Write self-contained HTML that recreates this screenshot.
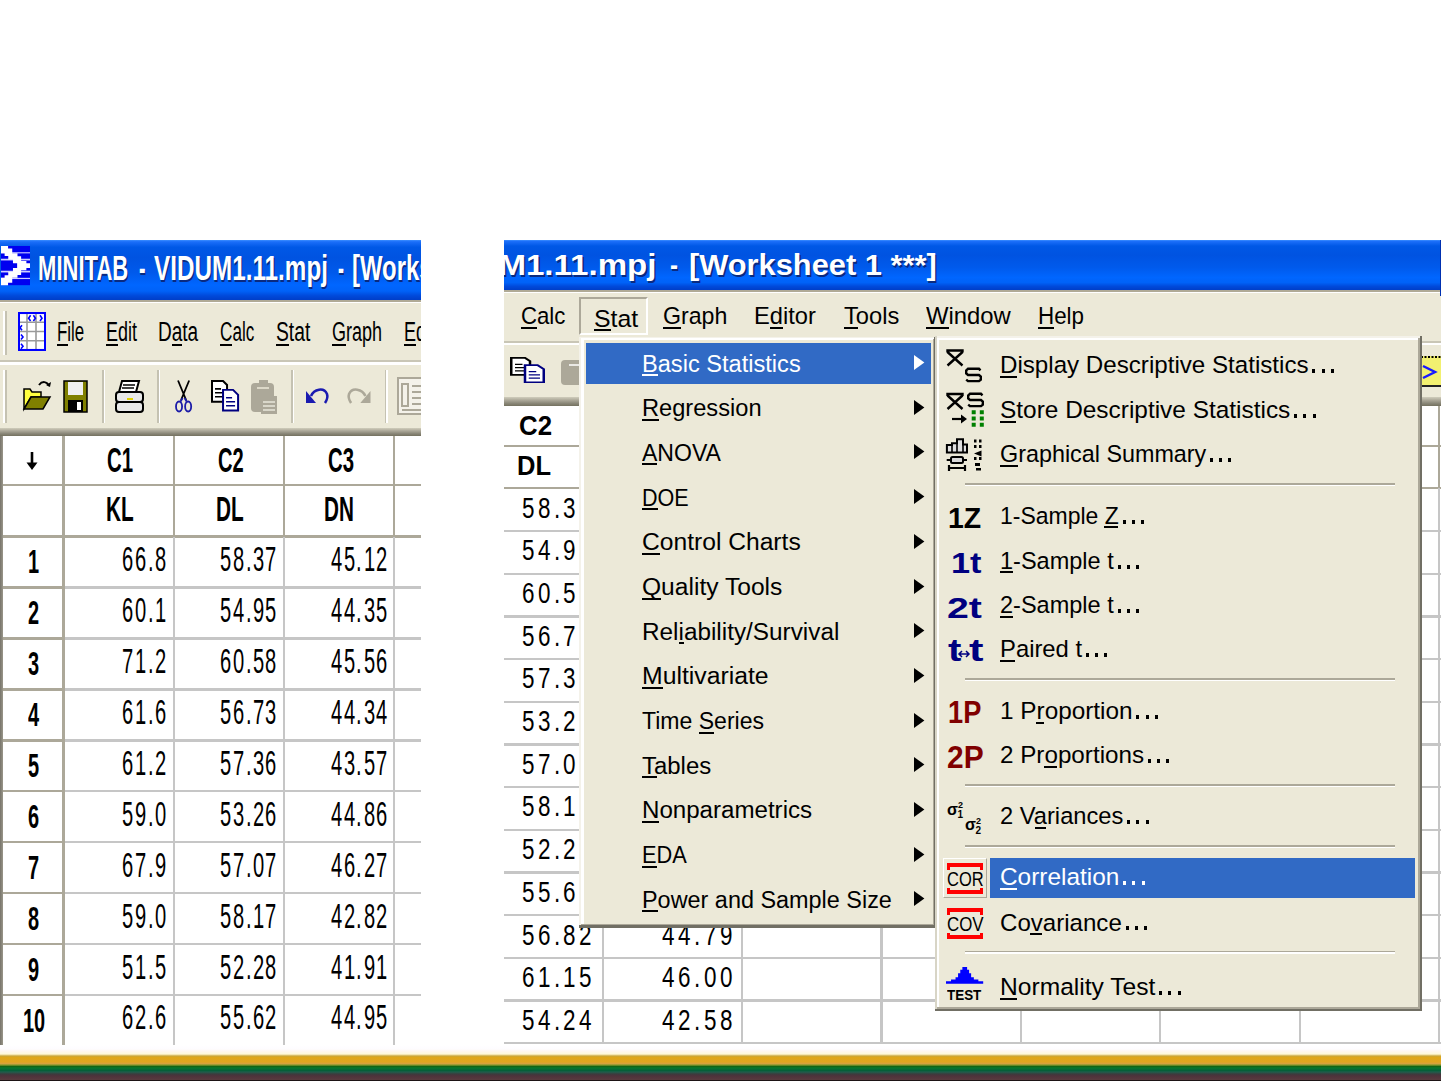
<!DOCTYPE html>
<html><head><meta charset="utf-8"><style>
html,body{margin:0;padding:0;width:1441px;height:1081px;overflow:hidden;background:#fff}
div,span,svg{position:absolute}
span{white-space:nowrap;font-family:"Liberation Sans",sans-serif;transform-origin:0 0}
svg{overflow:visible}
</style></head><body>
<div style="left:0.00px;top:0.00px;width:1441.00px;height:1081.00px;background:#fff;"></div>
<div style="left:0px;top:240px;width:421px;height:805px;overflow:hidden;">
<div style="left:0.00px;top:0.00px;width:421.00px;height:60.00px;background:linear-gradient(180deg,#3c8eff 0%,#1b6ef9 3%,#0058e6 12%,#0053e1 30%,#005aec 55%,#0066ff 75%,#0062f8 85%,#0049da 93%,#003ec8 100%);"></div>
<svg style="left:1.30px;top:6.20px;" width="29.00" height="39.20" viewBox="0 0 16 16" preserveAspectRatio="none"><rect width="16" height="16" fill="#0000f0"/><rect y="2.55" width="16" height="0.45" fill="#d0d0ff"/><rect y="5.2" width="16" height="0.7" fill="#d0d0ff"/><rect y="10.1" width="16" height="0.7" fill="#d0d0ff"/><rect y="13" width="16" height="0.5" fill="#d0d0ff"/><polygon fill="#fff" points="0,0 3.9,0 3.9,1 6.2,1 6.2,3 9.1,3 9.1,4.2 11.1,4.2 11.1,6.1 14,6.1 14,7 16,7 16,9 14,9 14,9.9 11.1,9.9 11.1,11.8 9.1,11.8 9.1,13 6.2,13 6.2,15 3.9,15 3.9,16 0,16 0,13 2,13 2,11.9 4,11.9 4,10.5 6.6,10.5 6.6,9 8.9,9 8.9,7 6.6,7 6.6,5.5 4,5.5 4,4.1 2,4.1 2,3 0,3"/></svg>
<span style="left:37.70px;top:11.40px;font-size:34.88px;line-height:34.88px;font-weight:bold;color:#fff;transform:scaleX(0.6326);text-shadow:1.5px 1.5px 0 #0a2a80;">MINITAB</span>
<span style="left:138.50px;top:11.40px;font-size:34.88px;line-height:34.88px;font-weight:bold;color:#fff;transform:scaleX(0.5596);text-shadow:1.5px 1.5px 0 #0a2a80;">-</span>
<span style="left:153.80px;top:11.40px;font-size:34.88px;line-height:34.88px;font-weight:bold;color:#fff;transform:scaleX(0.6958);text-shadow:1.5px 1.5px 0 #0a2a80;">VIDUM1.11.mpj</span>
<span style="left:338.00px;top:11.40px;font-size:34.88px;line-height:34.88px;font-weight:bold;color:#fff;transform:scaleX(0.5165);text-shadow:1.5px 1.5px 0 #0a2a80;">-</span>
<span style="left:351.70px;top:11.40px;font-size:34.88px;line-height:34.88px;font-weight:bold;color:#fff;transform:scaleX(0.6849);text-shadow:1.5px 1.5px 0 #0a2a80;">[Worksheet 1 ***]</span>
<div style="left:0.00px;top:60.00px;width:421.00px;height:1.50px;background:#b0aa96;"></div>
<div style="left:0.00px;top:61.50px;width:421.00px;height:2.00px;background:#fff;"></div>
<div style="left:0.00px;top:63.00px;width:421.00px;height:57.00px;background:#ECE9D8;"></div>
<div style="left:3.00px;top:71.00px;width:2.00px;height:44.00px;background:#fff;"></div>
<div style="left:5.00px;top:71.00px;width:2.00px;height:44.00px;background:#c5c2b2;"></div>
<svg style="left:18.00px;top:72.00px;" width="28.00" height="39.00" viewBox="0 0 14 19" preserveAspectRatio="none"><rect x="0.5" y="0.5" width="13" height="18" fill="#fff"/><path d="M0.5 5h13M0.5 9.5h13M0.5 14h13M4.5 0.5v18M9 0.5v18" stroke="#9a9a9a" stroke-width="0.8"/><rect x="0.5" y="0.5" width="13" height="18" fill="none" stroke="#0000ff" stroke-width="1"/><path d="M6.3 1.6l-1 1.4 1 1.4M7.7 1.6l1 1.4-1 1.4M11 1.6l1 1.4-1 1.4M2 6.5l-1 1.2 1 1.2M1.5 11l1 1.2-1 1.2M1.5 15.5l1 1.2-1 1.2" stroke="#0000ff" stroke-width="0.8" fill="none"/></svg>
<span style="left:332.10px;top:78.00px;font-size:27.62px;line-height:27.62px;font-weight:normal;color:#000;transform:scaleX(0.6515);">Graph</span>
<div style="left:332.10px;top:103.60px;width:13.99px;height:2.70px;background:#000;"></div>
<span style="left:57.30px;top:78.00px;font-size:27.62px;line-height:27.62px;font-weight:normal;color:#000;transform:scaleX(0.6114);">File</span>
<div style="left:57.30px;top:103.60px;width:10.31px;height:2.70px;background:#000;"></div>
<span style="left:106.00px;top:78.00px;font-size:27.62px;line-height:27.62px;font-weight:normal;color:#000;transform:scaleX(0.6515);">Edit</span>
<div style="left:106.00px;top:103.60px;width:12.00px;height:2.70px;background:#000;"></div>
<span style="left:158.10px;top:78.00px;font-size:27.62px;line-height:27.62px;font-weight:normal;color:#000;transform:scaleX(0.6889);">Data</span>
<div style="left:171.84px;top:103.60px;width:10.58px;height:2.70px;background:#000;"></div>
<span style="left:220.00px;top:78.00px;font-size:27.62px;line-height:27.62px;font-weight:normal;color:#000;transform:scaleX(0.6207);">Calc</span>
<div style="left:220.00px;top:103.60px;width:12.38px;height:2.70px;background:#000;"></div>
<span style="left:275.70px;top:78.00px;font-size:27.62px;line-height:27.62px;font-weight:normal;color:#000;transform:scaleX(0.6982);">Stat</span>
<div style="left:275.70px;top:103.60px;width:12.86px;height:2.70px;background:#000;"></div>
<span style="left:404.30px;top:78.00px;font-size:27.62px;line-height:27.62px;font-weight:normal;color:#000;transform:scaleX(0.6515);">Editor</span>
<div style="left:404.30px;top:103.60px;width:12.00px;height:2.70px;background:#000;"></div>
<div style="left:0.00px;top:120.00px;width:421.00px;height:1.50px;background:#c9c6b6;"></div>
<div style="left:0.00px;top:121.50px;width:421.00px;height:3.50px;background:#fff;"></div>
<div style="left:0.00px;top:125.00px;width:421.00px;height:63.00px;background:#ECE9D8;"></div>
<div style="left:3.00px;top:130.00px;width:2.00px;height:53.00px;background:#fff;"></div>
<div style="left:5.00px;top:130.00px;width:2.00px;height:53.00px;background:#c5c2b2;"></div>
<div style="left:102.00px;top:130.00px;width:1.50px;height:53.00px;background:#c5c2b2;"></div>
<div style="left:103.50px;top:130.00px;width:1.50px;height:53.00px;background:#fff;"></div>
<div style="left:157.00px;top:130.00px;width:1.50px;height:53.00px;background:#c5c2b2;"></div>
<div style="left:158.50px;top:130.00px;width:1.50px;height:53.00px;background:#fff;"></div>
<div style="left:291.20px;top:130.00px;width:1.50px;height:53.00px;background:#c5c2b2;"></div>
<div style="left:292.70px;top:130.00px;width:1.50px;height:53.00px;background:#fff;"></div>
<div style="left:384.50px;top:130.00px;width:1.50px;height:53.00px;background:#c5c2b2;"></div>
<div style="left:386.00px;top:130.00px;width:1.50px;height:53.00px;background:#fff;"></div>
<svg style="left:23.00px;top:139.00px;" width="28.00" height="33.00" viewBox="0 0 28 33" preserveAspectRatio="none"><path d="M16 6c3-4 8-4 10 1" stroke="#000" stroke-width="2" fill="none"/><path d="M23 6l4 2 1-5" fill="#000"/><path d="M1 10h6l2 3h9v5H8L1 30z" fill="#ffff40" stroke="#000" stroke-width="1.5"/><path d="M1 30l7-12h19l-7 12z" fill="#808000" stroke="#000" stroke-width="1.5"/></svg>
<svg style="left:63.00px;top:140.00px;" width="25.00" height="33.00" viewBox="0 0 25 33" preserveAspectRatio="none"><rect x="1" y="1" width="23" height="31" fill="#808000" stroke="#000" stroke-width="1.5"/><rect x="5" y="2" width="15" height="13" fill="#f0f0f0"/><rect x="5" y="20" width="15" height="12" fill="#000"/><rect x="14" y="22" width="4" height="8" fill="#fff"/></svg>
<svg style="left:115.00px;top:140.00px;" width="29.00" height="33.00" viewBox="0 0 29 33" preserveAspectRatio="none"><path d="M7 1h17l-3 11H4z" fill="#fff" stroke="#000" stroke-width="2"/><path d="M8 5h12M7 8h12" stroke="#000" stroke-width="1.5"/><rect x="1" y="12" width="27" height="10" rx="3" fill="#e8e8e8" stroke="#000" stroke-width="2"/><rect x="1" y="22" width="27" height="10" rx="3" fill="#e8e8e8" stroke="#000" stroke-width="2"/><rect x="12" y="18" width="6" height="2" fill="#e0d000"/></svg>
<svg style="left:174.50px;top:140.00px;" width="17.20" height="33.00" viewBox="0 0 17 33" preserveAspectRatio="none"><path d="M3 0.5L11 20M14 0.5L6 20" stroke="#000" stroke-width="1.8"/><ellipse cx="4" cy="26.5" rx="3" ry="5" fill="none" stroke="#1c1ca8" stroke-width="1.8"/><ellipse cx="13" cy="26.5" rx="3" ry="5" fill="none" stroke="#1c1ca8" stroke-width="1.8"/><path d="M5.5 21.5L7.5 18M11.5 21.5L9.5 18" stroke="#1c1ca8" stroke-width="1.8"/></svg>
<svg style="left:210.70px;top:140.00px;" width="28.10" height="31.60" viewBox="0 0 28 32" preserveAspectRatio="none"><path d="M1 1h11l4 4v17H1z" fill="#fff" stroke="#000" stroke-width="2"/><path d="M4 9h6M4 13h8M4 17h8" stroke="#000" stroke-width="1.6"/><path d="M12 10h10l5 5v16H12z" fill="#fff" stroke="#000080" stroke-width="2"/><path d="M15 18h6M15 22h9M15 26h9" stroke="#000080" stroke-width="1.6"/></svg>
<svg style="left:250.60px;top:140.00px;" width="27.00" height="34.00" viewBox="0 0 27 34" preserveAspectRatio="none"><rect x="0" y="3" width="23" height="29" rx="4" fill="#aca899"/><rect x="8" y="0" width="9" height="6" fill="#aca899"/><rect x="10" y="16" width="16" height="18" fill="#aca899"/><path d="M12 22h12M12 26h12M12 30h12" stroke="#e8e6da" stroke-width="1.5"/><path d="M6 8h12" stroke="#ece9d8" stroke-width="1.5"/></svg>
<svg style="left:305.80px;top:147.00px;" width="23.00" height="17.00" viewBox="0 0 23 17" preserveAspectRatio="none"><path d="M5 9c3-7 13-9 16-2 1 3 0 6-2 9" stroke="#1a1ab0" stroke-width="2.5" fill="none"/><path d="M0 4v12h10z" fill="#1a1ab0"/></svg>
<svg style="left:346.60px;top:147.00px;" width="23.50" height="17.00" viewBox="0 0 23 17" preserveAspectRatio="none"><path d="M18 9c-3-7-13-9-16-2-1 3 0 6 2 9" stroke="#aca899" stroke-width="2.5" fill="none"/><path d="M23 4v12H13z" fill="#aca899"/></svg>
<svg style="left:397.30px;top:137.00px;" width="30.00" height="38.00" viewBox="0 0 30 38" preserveAspectRatio="none"><rect x="1" y="1" width="28" height="36" fill="#f4f2ea" stroke="#aca899" stroke-width="2"/><rect x="5" y="7" width="6" height="22" fill="none" stroke="#aca899" stroke-width="2"/><path d="M15 9h12M15 15h12M15 21h12M15 27h12M5 33h20" stroke="#aca899" stroke-width="2"/></svg>
<div style="left:0.00px;top:188.00px;width:421.00px;height:8.00px;background:linear-gradient(180deg,#d0cdbc 0%,#aca899 35%,#8a8778 70%,#74715f 100%);"></div>
<div style="left:0.00px;top:196.00px;width:421.00px;height:609.00px;background:#fff;"></div>
<div style="left:0.00px;top:243.75px;width:421.00px;height:2.50px;background:#ACA899;"></div>
<div style="left:0.00px;top:295.25px;width:421.00px;height:2.50px;background:#ACA899;"></div>
<div style="left:0.00px;top:346.35px;width:63.60px;height:2.50px;background:#ACA899;"></div>
<div style="left:63.60px;top:346.35px;width:357.40px;height:2.50px;background:#C6C6C6;"></div>
<div style="left:0.00px;top:397.25px;width:63.60px;height:2.50px;background:#ACA899;"></div>
<div style="left:63.60px;top:397.25px;width:357.40px;height:2.50px;background:#C6C6C6;"></div>
<div style="left:0.00px;top:448.15px;width:63.60px;height:2.50px;background:#ACA899;"></div>
<div style="left:63.60px;top:448.15px;width:357.40px;height:2.50px;background:#C6C6C6;"></div>
<div style="left:0.00px;top:499.05px;width:63.60px;height:2.50px;background:#ACA899;"></div>
<div style="left:63.60px;top:499.05px;width:357.40px;height:2.50px;background:#C6C6C6;"></div>
<div style="left:0.00px;top:549.95px;width:63.60px;height:2.50px;background:#ACA899;"></div>
<div style="left:63.60px;top:549.95px;width:357.40px;height:2.50px;background:#C6C6C6;"></div>
<div style="left:0.00px;top:600.85px;width:63.60px;height:2.50px;background:#ACA899;"></div>
<div style="left:63.60px;top:600.85px;width:357.40px;height:2.50px;background:#C6C6C6;"></div>
<div style="left:0.00px;top:651.75px;width:63.60px;height:2.50px;background:#ACA899;"></div>
<div style="left:63.60px;top:651.75px;width:357.40px;height:2.50px;background:#C6C6C6;"></div>
<div style="left:0.00px;top:702.65px;width:63.60px;height:2.50px;background:#ACA899;"></div>
<div style="left:63.60px;top:702.65px;width:357.40px;height:2.50px;background:#C6C6C6;"></div>
<div style="left:0.00px;top:753.55px;width:63.60px;height:2.50px;background:#ACA899;"></div>
<div style="left:63.60px;top:753.55px;width:357.40px;height:2.50px;background:#C6C6C6;"></div>
<div style="left:62.45px;top:196.00px;width:2.50px;height:609.00px;background:#ACA899;"></div>
<div style="left:172.70px;top:196.00px;width:2.20px;height:100.50px;background:#ACA899;"></div>
<div style="left:172.70px;top:296.50px;width:2.20px;height:508.50px;background:#C6C6C6;"></div>
<div style="left:283.10px;top:196.00px;width:2.20px;height:100.50px;background:#ACA899;"></div>
<div style="left:283.10px;top:296.50px;width:2.20px;height:508.50px;background:#C6C6C6;"></div>
<div style="left:393.20px;top:196.00px;width:2.20px;height:100.50px;background:#ACA899;"></div>
<div style="left:393.20px;top:296.50px;width:2.20px;height:508.50px;background:#C6C6C6;"></div>
<div style="left:0.00px;top:196.00px;width:3.00px;height:609.00px;background:linear-gradient(90deg,#77746a,#9a978a);"></div>
<svg style="left:26.00px;top:212.20px;" width="12.00" height="18.00" viewBox="0 0 12 18" preserveAspectRatio="none"><path d="M6 0v13" stroke="#000" stroke-width="2.6"/><path d="M0.5 10.5h11L6 18z" fill="#000"/></svg>
<span style="left:107.00px;top:203.20px;font-size:34.88px;line-height:34.88px;font-weight:bold;color:#000;transform:scaleX(0.5832);">C1</span>
<span style="left:218.00px;top:203.20px;font-size:34.88px;line-height:34.88px;font-weight:bold;color:#000;transform:scaleX(0.5765);">C2</span>
<span style="left:328.20px;top:203.20px;font-size:34.88px;line-height:34.88px;font-weight:bold;color:#000;transform:scaleX(0.5832);">C3</span>
<span style="left:105.70px;top:252.00px;font-size:34.88px;line-height:34.88px;font-weight:bold;color:#000;transform:scaleX(0.5957);">KL</span>
<span style="left:216.00px;top:252.00px;font-size:34.88px;line-height:34.88px;font-weight:bold;color:#000;transform:scaleX(0.5957);">DL</span>
<span style="left:324.30px;top:252.00px;font-size:34.88px;line-height:34.88px;font-weight:bold;color:#000;transform:scaleX(0.5936);">DN</span>
<span style="left:154.80px;top:302.30px;font-size:34.96px;line-height:34.96px;font-weight:normal;color:#000;transform:scaleX(0.5762)">8</span>
<span style="left:147.55px;top:302.30px;font-size:34.96px;line-height:34.96px;font-weight:normal;color:#000;transform:scaleX(0.5762)">.</span>
<span style="left:134.70px;top:302.30px;font-size:34.96px;line-height:34.96px;font-weight:normal;color:#000;transform:scaleX(0.5762)">6</span>
<span style="left:122.30px;top:302.30px;font-size:34.96px;line-height:34.96px;font-weight:normal;color:#000;transform:scaleX(0.5762)">6</span>
<span style="left:265.20px;top:302.30px;font-size:34.96px;line-height:34.96px;font-weight:normal;color:#000;transform:scaleX(0.5762)">7</span>
<span style="left:252.80px;top:302.30px;font-size:34.96px;line-height:34.96px;font-weight:normal;color:#000;transform:scaleX(0.5762)">3</span>
<span style="left:245.55px;top:302.30px;font-size:34.96px;line-height:34.96px;font-weight:normal;color:#000;transform:scaleX(0.5762)">.</span>
<span style="left:232.70px;top:302.30px;font-size:34.96px;line-height:34.96px;font-weight:normal;color:#000;transform:scaleX(0.5762)">8</span>
<span style="left:220.30px;top:302.30px;font-size:34.96px;line-height:34.96px;font-weight:normal;color:#000;transform:scaleX(0.5762)">5</span>
<span style="left:376.00px;top:302.30px;font-size:34.96px;line-height:34.96px;font-weight:normal;color:#000;transform:scaleX(0.5762)">2</span>
<span style="left:363.60px;top:302.30px;font-size:34.96px;line-height:34.96px;font-weight:normal;color:#000;transform:scaleX(0.5762)">1</span>
<span style="left:356.35px;top:302.30px;font-size:34.96px;line-height:34.96px;font-weight:normal;color:#000;transform:scaleX(0.5762)">.</span>
<span style="left:343.50px;top:302.30px;font-size:34.96px;line-height:34.96px;font-weight:normal;color:#000;transform:scaleX(0.5762)">5</span>
<span style="left:331.10px;top:302.30px;font-size:34.96px;line-height:34.96px;font-weight:normal;color:#000;transform:scaleX(0.5762)">4</span>
<span style="left:27.65px;top:305.40px;font-size:33.81px;line-height:33.81px;font-weight:bold;color:#000;transform:scaleX(0.5905);">1</span>
<span style="left:154.80px;top:353.20px;font-size:34.96px;line-height:34.96px;font-weight:normal;color:#000;transform:scaleX(0.5762)">1</span>
<span style="left:147.55px;top:353.20px;font-size:34.96px;line-height:34.96px;font-weight:normal;color:#000;transform:scaleX(0.5762)">.</span>
<span style="left:134.70px;top:353.20px;font-size:34.96px;line-height:34.96px;font-weight:normal;color:#000;transform:scaleX(0.5762)">0</span>
<span style="left:122.30px;top:353.20px;font-size:34.96px;line-height:34.96px;font-weight:normal;color:#000;transform:scaleX(0.5762)">6</span>
<span style="left:265.20px;top:353.20px;font-size:34.96px;line-height:34.96px;font-weight:normal;color:#000;transform:scaleX(0.5762)">5</span>
<span style="left:252.80px;top:353.20px;font-size:34.96px;line-height:34.96px;font-weight:normal;color:#000;transform:scaleX(0.5762)">9</span>
<span style="left:245.55px;top:353.20px;font-size:34.96px;line-height:34.96px;font-weight:normal;color:#000;transform:scaleX(0.5762)">.</span>
<span style="left:232.70px;top:353.20px;font-size:34.96px;line-height:34.96px;font-weight:normal;color:#000;transform:scaleX(0.5762)">4</span>
<span style="left:220.30px;top:353.20px;font-size:34.96px;line-height:34.96px;font-weight:normal;color:#000;transform:scaleX(0.5762)">5</span>
<span style="left:376.00px;top:353.20px;font-size:34.96px;line-height:34.96px;font-weight:normal;color:#000;transform:scaleX(0.5762)">5</span>
<span style="left:363.60px;top:353.20px;font-size:34.96px;line-height:34.96px;font-weight:normal;color:#000;transform:scaleX(0.5762)">3</span>
<span style="left:356.35px;top:353.20px;font-size:34.96px;line-height:34.96px;font-weight:normal;color:#000;transform:scaleX(0.5762)">.</span>
<span style="left:343.50px;top:353.20px;font-size:34.96px;line-height:34.96px;font-weight:normal;color:#000;transform:scaleX(0.5762)">4</span>
<span style="left:331.10px;top:353.20px;font-size:34.96px;line-height:34.96px;font-weight:normal;color:#000;transform:scaleX(0.5762)">4</span>
<span style="left:27.65px;top:356.30px;font-size:33.81px;line-height:33.81px;font-weight:bold;color:#000;transform:scaleX(0.5905);">2</span>
<span style="left:154.80px;top:404.10px;font-size:34.96px;line-height:34.96px;font-weight:normal;color:#000;transform:scaleX(0.5762)">2</span>
<span style="left:147.55px;top:404.10px;font-size:34.96px;line-height:34.96px;font-weight:normal;color:#000;transform:scaleX(0.5762)">.</span>
<span style="left:134.70px;top:404.10px;font-size:34.96px;line-height:34.96px;font-weight:normal;color:#000;transform:scaleX(0.5762)">1</span>
<span style="left:122.30px;top:404.10px;font-size:34.96px;line-height:34.96px;font-weight:normal;color:#000;transform:scaleX(0.5762)">7</span>
<span style="left:265.20px;top:404.10px;font-size:34.96px;line-height:34.96px;font-weight:normal;color:#000;transform:scaleX(0.5762)">8</span>
<span style="left:252.80px;top:404.10px;font-size:34.96px;line-height:34.96px;font-weight:normal;color:#000;transform:scaleX(0.5762)">5</span>
<span style="left:245.55px;top:404.10px;font-size:34.96px;line-height:34.96px;font-weight:normal;color:#000;transform:scaleX(0.5762)">.</span>
<span style="left:232.70px;top:404.10px;font-size:34.96px;line-height:34.96px;font-weight:normal;color:#000;transform:scaleX(0.5762)">0</span>
<span style="left:220.30px;top:404.10px;font-size:34.96px;line-height:34.96px;font-weight:normal;color:#000;transform:scaleX(0.5762)">6</span>
<span style="left:376.00px;top:404.10px;font-size:34.96px;line-height:34.96px;font-weight:normal;color:#000;transform:scaleX(0.5762)">6</span>
<span style="left:363.60px;top:404.10px;font-size:34.96px;line-height:34.96px;font-weight:normal;color:#000;transform:scaleX(0.5762)">5</span>
<span style="left:356.35px;top:404.10px;font-size:34.96px;line-height:34.96px;font-weight:normal;color:#000;transform:scaleX(0.5762)">.</span>
<span style="left:343.50px;top:404.10px;font-size:34.96px;line-height:34.96px;font-weight:normal;color:#000;transform:scaleX(0.5762)">5</span>
<span style="left:331.10px;top:404.10px;font-size:34.96px;line-height:34.96px;font-weight:normal;color:#000;transform:scaleX(0.5762)">4</span>
<span style="left:27.65px;top:407.20px;font-size:33.81px;line-height:33.81px;font-weight:bold;color:#000;transform:scaleX(0.5905);">3</span>
<span style="left:154.80px;top:455.00px;font-size:34.96px;line-height:34.96px;font-weight:normal;color:#000;transform:scaleX(0.5762)">6</span>
<span style="left:147.55px;top:455.00px;font-size:34.96px;line-height:34.96px;font-weight:normal;color:#000;transform:scaleX(0.5762)">.</span>
<span style="left:134.70px;top:455.00px;font-size:34.96px;line-height:34.96px;font-weight:normal;color:#000;transform:scaleX(0.5762)">1</span>
<span style="left:122.30px;top:455.00px;font-size:34.96px;line-height:34.96px;font-weight:normal;color:#000;transform:scaleX(0.5762)">6</span>
<span style="left:265.20px;top:455.00px;font-size:34.96px;line-height:34.96px;font-weight:normal;color:#000;transform:scaleX(0.5762)">3</span>
<span style="left:252.80px;top:455.00px;font-size:34.96px;line-height:34.96px;font-weight:normal;color:#000;transform:scaleX(0.5762)">7</span>
<span style="left:245.55px;top:455.00px;font-size:34.96px;line-height:34.96px;font-weight:normal;color:#000;transform:scaleX(0.5762)">.</span>
<span style="left:232.70px;top:455.00px;font-size:34.96px;line-height:34.96px;font-weight:normal;color:#000;transform:scaleX(0.5762)">6</span>
<span style="left:220.30px;top:455.00px;font-size:34.96px;line-height:34.96px;font-weight:normal;color:#000;transform:scaleX(0.5762)">5</span>
<span style="left:376.00px;top:455.00px;font-size:34.96px;line-height:34.96px;font-weight:normal;color:#000;transform:scaleX(0.5762)">4</span>
<span style="left:363.60px;top:455.00px;font-size:34.96px;line-height:34.96px;font-weight:normal;color:#000;transform:scaleX(0.5762)">3</span>
<span style="left:356.35px;top:455.00px;font-size:34.96px;line-height:34.96px;font-weight:normal;color:#000;transform:scaleX(0.5762)">.</span>
<span style="left:343.50px;top:455.00px;font-size:34.96px;line-height:34.96px;font-weight:normal;color:#000;transform:scaleX(0.5762)">4</span>
<span style="left:331.10px;top:455.00px;font-size:34.96px;line-height:34.96px;font-weight:normal;color:#000;transform:scaleX(0.5762)">4</span>
<span style="left:27.65px;top:458.10px;font-size:33.81px;line-height:33.81px;font-weight:bold;color:#000;transform:scaleX(0.5905);">4</span>
<span style="left:154.80px;top:505.90px;font-size:34.96px;line-height:34.96px;font-weight:normal;color:#000;transform:scaleX(0.5762)">2</span>
<span style="left:147.55px;top:505.90px;font-size:34.96px;line-height:34.96px;font-weight:normal;color:#000;transform:scaleX(0.5762)">.</span>
<span style="left:134.70px;top:505.90px;font-size:34.96px;line-height:34.96px;font-weight:normal;color:#000;transform:scaleX(0.5762)">1</span>
<span style="left:122.30px;top:505.90px;font-size:34.96px;line-height:34.96px;font-weight:normal;color:#000;transform:scaleX(0.5762)">6</span>
<span style="left:265.20px;top:505.90px;font-size:34.96px;line-height:34.96px;font-weight:normal;color:#000;transform:scaleX(0.5762)">6</span>
<span style="left:252.80px;top:505.90px;font-size:34.96px;line-height:34.96px;font-weight:normal;color:#000;transform:scaleX(0.5762)">3</span>
<span style="left:245.55px;top:505.90px;font-size:34.96px;line-height:34.96px;font-weight:normal;color:#000;transform:scaleX(0.5762)">.</span>
<span style="left:232.70px;top:505.90px;font-size:34.96px;line-height:34.96px;font-weight:normal;color:#000;transform:scaleX(0.5762)">7</span>
<span style="left:220.30px;top:505.90px;font-size:34.96px;line-height:34.96px;font-weight:normal;color:#000;transform:scaleX(0.5762)">5</span>
<span style="left:376.00px;top:505.90px;font-size:34.96px;line-height:34.96px;font-weight:normal;color:#000;transform:scaleX(0.5762)">7</span>
<span style="left:363.60px;top:505.90px;font-size:34.96px;line-height:34.96px;font-weight:normal;color:#000;transform:scaleX(0.5762)">5</span>
<span style="left:356.35px;top:505.90px;font-size:34.96px;line-height:34.96px;font-weight:normal;color:#000;transform:scaleX(0.5762)">.</span>
<span style="left:343.50px;top:505.90px;font-size:34.96px;line-height:34.96px;font-weight:normal;color:#000;transform:scaleX(0.5762)">3</span>
<span style="left:331.10px;top:505.90px;font-size:34.96px;line-height:34.96px;font-weight:normal;color:#000;transform:scaleX(0.5762)">4</span>
<span style="left:27.65px;top:509.00px;font-size:33.81px;line-height:33.81px;font-weight:bold;color:#000;transform:scaleX(0.5905);">5</span>
<span style="left:154.80px;top:556.80px;font-size:34.96px;line-height:34.96px;font-weight:normal;color:#000;transform:scaleX(0.5762)">0</span>
<span style="left:147.55px;top:556.80px;font-size:34.96px;line-height:34.96px;font-weight:normal;color:#000;transform:scaleX(0.5762)">.</span>
<span style="left:134.70px;top:556.80px;font-size:34.96px;line-height:34.96px;font-weight:normal;color:#000;transform:scaleX(0.5762)">9</span>
<span style="left:122.30px;top:556.80px;font-size:34.96px;line-height:34.96px;font-weight:normal;color:#000;transform:scaleX(0.5762)">5</span>
<span style="left:265.20px;top:556.80px;font-size:34.96px;line-height:34.96px;font-weight:normal;color:#000;transform:scaleX(0.5762)">6</span>
<span style="left:252.80px;top:556.80px;font-size:34.96px;line-height:34.96px;font-weight:normal;color:#000;transform:scaleX(0.5762)">2</span>
<span style="left:245.55px;top:556.80px;font-size:34.96px;line-height:34.96px;font-weight:normal;color:#000;transform:scaleX(0.5762)">.</span>
<span style="left:232.70px;top:556.80px;font-size:34.96px;line-height:34.96px;font-weight:normal;color:#000;transform:scaleX(0.5762)">3</span>
<span style="left:220.30px;top:556.80px;font-size:34.96px;line-height:34.96px;font-weight:normal;color:#000;transform:scaleX(0.5762)">5</span>
<span style="left:376.00px;top:556.80px;font-size:34.96px;line-height:34.96px;font-weight:normal;color:#000;transform:scaleX(0.5762)">6</span>
<span style="left:363.60px;top:556.80px;font-size:34.96px;line-height:34.96px;font-weight:normal;color:#000;transform:scaleX(0.5762)">8</span>
<span style="left:356.35px;top:556.80px;font-size:34.96px;line-height:34.96px;font-weight:normal;color:#000;transform:scaleX(0.5762)">.</span>
<span style="left:343.50px;top:556.80px;font-size:34.96px;line-height:34.96px;font-weight:normal;color:#000;transform:scaleX(0.5762)">4</span>
<span style="left:331.10px;top:556.80px;font-size:34.96px;line-height:34.96px;font-weight:normal;color:#000;transform:scaleX(0.5762)">4</span>
<span style="left:27.65px;top:559.90px;font-size:33.81px;line-height:33.81px;font-weight:bold;color:#000;transform:scaleX(0.5905);">6</span>
<span style="left:154.80px;top:607.70px;font-size:34.96px;line-height:34.96px;font-weight:normal;color:#000;transform:scaleX(0.5762)">9</span>
<span style="left:147.55px;top:607.70px;font-size:34.96px;line-height:34.96px;font-weight:normal;color:#000;transform:scaleX(0.5762)">.</span>
<span style="left:134.70px;top:607.70px;font-size:34.96px;line-height:34.96px;font-weight:normal;color:#000;transform:scaleX(0.5762)">7</span>
<span style="left:122.30px;top:607.70px;font-size:34.96px;line-height:34.96px;font-weight:normal;color:#000;transform:scaleX(0.5762)">6</span>
<span style="left:265.20px;top:607.70px;font-size:34.96px;line-height:34.96px;font-weight:normal;color:#000;transform:scaleX(0.5762)">7</span>
<span style="left:252.80px;top:607.70px;font-size:34.96px;line-height:34.96px;font-weight:normal;color:#000;transform:scaleX(0.5762)">0</span>
<span style="left:245.55px;top:607.70px;font-size:34.96px;line-height:34.96px;font-weight:normal;color:#000;transform:scaleX(0.5762)">.</span>
<span style="left:232.70px;top:607.70px;font-size:34.96px;line-height:34.96px;font-weight:normal;color:#000;transform:scaleX(0.5762)">7</span>
<span style="left:220.30px;top:607.70px;font-size:34.96px;line-height:34.96px;font-weight:normal;color:#000;transform:scaleX(0.5762)">5</span>
<span style="left:376.00px;top:607.70px;font-size:34.96px;line-height:34.96px;font-weight:normal;color:#000;transform:scaleX(0.5762)">7</span>
<span style="left:363.60px;top:607.70px;font-size:34.96px;line-height:34.96px;font-weight:normal;color:#000;transform:scaleX(0.5762)">2</span>
<span style="left:356.35px;top:607.70px;font-size:34.96px;line-height:34.96px;font-weight:normal;color:#000;transform:scaleX(0.5762)">.</span>
<span style="left:343.50px;top:607.70px;font-size:34.96px;line-height:34.96px;font-weight:normal;color:#000;transform:scaleX(0.5762)">6</span>
<span style="left:331.10px;top:607.70px;font-size:34.96px;line-height:34.96px;font-weight:normal;color:#000;transform:scaleX(0.5762)">4</span>
<span style="left:27.65px;top:610.80px;font-size:33.81px;line-height:33.81px;font-weight:bold;color:#000;transform:scaleX(0.5905);">7</span>
<span style="left:154.80px;top:658.60px;font-size:34.96px;line-height:34.96px;font-weight:normal;color:#000;transform:scaleX(0.5762)">0</span>
<span style="left:147.55px;top:658.60px;font-size:34.96px;line-height:34.96px;font-weight:normal;color:#000;transform:scaleX(0.5762)">.</span>
<span style="left:134.70px;top:658.60px;font-size:34.96px;line-height:34.96px;font-weight:normal;color:#000;transform:scaleX(0.5762)">9</span>
<span style="left:122.30px;top:658.60px;font-size:34.96px;line-height:34.96px;font-weight:normal;color:#000;transform:scaleX(0.5762)">5</span>
<span style="left:265.20px;top:658.60px;font-size:34.96px;line-height:34.96px;font-weight:normal;color:#000;transform:scaleX(0.5762)">7</span>
<span style="left:252.80px;top:658.60px;font-size:34.96px;line-height:34.96px;font-weight:normal;color:#000;transform:scaleX(0.5762)">1</span>
<span style="left:245.55px;top:658.60px;font-size:34.96px;line-height:34.96px;font-weight:normal;color:#000;transform:scaleX(0.5762)">.</span>
<span style="left:232.70px;top:658.60px;font-size:34.96px;line-height:34.96px;font-weight:normal;color:#000;transform:scaleX(0.5762)">8</span>
<span style="left:220.30px;top:658.60px;font-size:34.96px;line-height:34.96px;font-weight:normal;color:#000;transform:scaleX(0.5762)">5</span>
<span style="left:376.00px;top:658.60px;font-size:34.96px;line-height:34.96px;font-weight:normal;color:#000;transform:scaleX(0.5762)">2</span>
<span style="left:363.60px;top:658.60px;font-size:34.96px;line-height:34.96px;font-weight:normal;color:#000;transform:scaleX(0.5762)">8</span>
<span style="left:356.35px;top:658.60px;font-size:34.96px;line-height:34.96px;font-weight:normal;color:#000;transform:scaleX(0.5762)">.</span>
<span style="left:343.50px;top:658.60px;font-size:34.96px;line-height:34.96px;font-weight:normal;color:#000;transform:scaleX(0.5762)">2</span>
<span style="left:331.10px;top:658.60px;font-size:34.96px;line-height:34.96px;font-weight:normal;color:#000;transform:scaleX(0.5762)">4</span>
<span style="left:27.65px;top:661.70px;font-size:33.81px;line-height:33.81px;font-weight:bold;color:#000;transform:scaleX(0.5905);">8</span>
<span style="left:154.80px;top:709.50px;font-size:34.96px;line-height:34.96px;font-weight:normal;color:#000;transform:scaleX(0.5762)">5</span>
<span style="left:147.55px;top:709.50px;font-size:34.96px;line-height:34.96px;font-weight:normal;color:#000;transform:scaleX(0.5762)">.</span>
<span style="left:134.70px;top:709.50px;font-size:34.96px;line-height:34.96px;font-weight:normal;color:#000;transform:scaleX(0.5762)">1</span>
<span style="left:122.30px;top:709.50px;font-size:34.96px;line-height:34.96px;font-weight:normal;color:#000;transform:scaleX(0.5762)">5</span>
<span style="left:265.20px;top:709.50px;font-size:34.96px;line-height:34.96px;font-weight:normal;color:#000;transform:scaleX(0.5762)">8</span>
<span style="left:252.80px;top:709.50px;font-size:34.96px;line-height:34.96px;font-weight:normal;color:#000;transform:scaleX(0.5762)">2</span>
<span style="left:245.55px;top:709.50px;font-size:34.96px;line-height:34.96px;font-weight:normal;color:#000;transform:scaleX(0.5762)">.</span>
<span style="left:232.70px;top:709.50px;font-size:34.96px;line-height:34.96px;font-weight:normal;color:#000;transform:scaleX(0.5762)">2</span>
<span style="left:220.30px;top:709.50px;font-size:34.96px;line-height:34.96px;font-weight:normal;color:#000;transform:scaleX(0.5762)">5</span>
<span style="left:376.00px;top:709.50px;font-size:34.96px;line-height:34.96px;font-weight:normal;color:#000;transform:scaleX(0.5762)">1</span>
<span style="left:363.60px;top:709.50px;font-size:34.96px;line-height:34.96px;font-weight:normal;color:#000;transform:scaleX(0.5762)">9</span>
<span style="left:356.35px;top:709.50px;font-size:34.96px;line-height:34.96px;font-weight:normal;color:#000;transform:scaleX(0.5762)">.</span>
<span style="left:343.50px;top:709.50px;font-size:34.96px;line-height:34.96px;font-weight:normal;color:#000;transform:scaleX(0.5762)">1</span>
<span style="left:331.10px;top:709.50px;font-size:34.96px;line-height:34.96px;font-weight:normal;color:#000;transform:scaleX(0.5762)">4</span>
<span style="left:27.65px;top:712.60px;font-size:33.81px;line-height:33.81px;font-weight:bold;color:#000;transform:scaleX(0.5905);">9</span>
<span style="left:154.80px;top:760.40px;font-size:34.96px;line-height:34.96px;font-weight:normal;color:#000;transform:scaleX(0.5762)">6</span>
<span style="left:147.55px;top:760.40px;font-size:34.96px;line-height:34.96px;font-weight:normal;color:#000;transform:scaleX(0.5762)">.</span>
<span style="left:134.70px;top:760.40px;font-size:34.96px;line-height:34.96px;font-weight:normal;color:#000;transform:scaleX(0.5762)">2</span>
<span style="left:122.30px;top:760.40px;font-size:34.96px;line-height:34.96px;font-weight:normal;color:#000;transform:scaleX(0.5762)">6</span>
<span style="left:265.20px;top:760.40px;font-size:34.96px;line-height:34.96px;font-weight:normal;color:#000;transform:scaleX(0.5762)">2</span>
<span style="left:252.80px;top:760.40px;font-size:34.96px;line-height:34.96px;font-weight:normal;color:#000;transform:scaleX(0.5762)">6</span>
<span style="left:245.55px;top:760.40px;font-size:34.96px;line-height:34.96px;font-weight:normal;color:#000;transform:scaleX(0.5762)">.</span>
<span style="left:232.70px;top:760.40px;font-size:34.96px;line-height:34.96px;font-weight:normal;color:#000;transform:scaleX(0.5762)">5</span>
<span style="left:220.30px;top:760.40px;font-size:34.96px;line-height:34.96px;font-weight:normal;color:#000;transform:scaleX(0.5762)">5</span>
<span style="left:376.00px;top:760.40px;font-size:34.96px;line-height:34.96px;font-weight:normal;color:#000;transform:scaleX(0.5762)">5</span>
<span style="left:363.60px;top:760.40px;font-size:34.96px;line-height:34.96px;font-weight:normal;color:#000;transform:scaleX(0.5762)">9</span>
<span style="left:356.35px;top:760.40px;font-size:34.96px;line-height:34.96px;font-weight:normal;color:#000;transform:scaleX(0.5762)">.</span>
<span style="left:343.50px;top:760.40px;font-size:34.96px;line-height:34.96px;font-weight:normal;color:#000;transform:scaleX(0.5762)">4</span>
<span style="left:331.10px;top:760.40px;font-size:34.96px;line-height:34.96px;font-weight:normal;color:#000;transform:scaleX(0.5762)">4</span>
<span style="left:22.90px;top:763.50px;font-size:33.81px;line-height:33.81px;font-weight:bold;color:#000;transform:scaleX(0.5905);">10</span>
</div>
<div style="left:504px;top:240px;width:937px;height:805px;overflow:hidden;">
<div style="left:0.00px;top:0.00px;width:937.00px;height:50.00px;background:linear-gradient(180deg,#3c8eff 0%,#1b6ef9 3%,#0058e6 12%,#0053e1 30%,#005aec 55%,#0066ff 75%,#0062f8 85%,#0049da 93%,#003ec8 100%);"></div>
<span style="left:-248.60px;top:10.00px;font-size:30.23px;line-height:30.23px;font-weight:bold;color:#fff;transform:scaleX(1.0933);text-shadow:1.5px 1.5px 0 #0a2a80;">MINITAB - VIDUM1.11.mpj</span>
<span style="left:166.00px;top:10.00px;font-size:30.23px;line-height:30.23px;font-weight:bold;color:#fff;transform:scaleX(0.7946);text-shadow:1.5px 1.5px 0 #0a2a80;">-</span>
<span style="left:184.50px;top:10.00px;font-size:30.23px;line-height:30.23px;font-weight:bold;color:#fff;transform:scaleX(1.0195);text-shadow:1.5px 1.5px 0 #0a2a80;">[Worksheet 1 ***]</span>
<div style="left:0.00px;top:50.00px;width:937.00px;height:1.50px;background:#b0aa96;"></div>
<div style="left:0.00px;top:51.50px;width:937.00px;height:2.00px;background:#fff;"></div>
<div style="left:0.00px;top:53.00px;width:937.00px;height:48.00px;background:#ECE9D8;"></div>
<div style="left:75.00px;top:57.00px;width:69.00px;height:38.00px;background:#ECE9D8;box-sizing:border-box;border-top:2px solid #aca899;border-left:2px solid #aca899;border-right:2px solid #fff;border-bottom:2px solid #fff;"></div>
<span style="left:17.00px;top:65.30px;font-size:23.26px;line-height:23.26px;font-weight:normal;color:#000;transform:scaleX(0.9541);">Calc</span>
<div style="left:17.00px;top:86.80px;width:16.02px;height:2.00px;background:#000;"></div>
<span style="left:90.20px;top:67.80px;font-size:23.26px;line-height:23.26px;font-weight:normal;color:#000;transform:scaleX(1.0708);">Stat</span>
<div style="left:90.20px;top:89.30px;width:16.61px;height:2.00px;background:#000;"></div>
<span style="left:159.00px;top:65.30px;font-size:23.26px;line-height:23.26px;font-weight:normal;color:#000;transform:scaleX(0.9965);">Graph</span>
<div style="left:159.00px;top:86.80px;width:18.03px;height:2.00px;background:#000;"></div>
<span style="left:250.20px;top:65.30px;font-size:23.26px;line-height:23.26px;font-weight:normal;color:#000;transform:scaleX(1.0174);">Editor</span>
<div style="left:265.98px;top:86.80px;width:13.16px;height:2.00px;background:#000;"></div>
<span style="left:339.70px;top:65.30px;font-size:23.26px;line-height:23.26px;font-weight:normal;color:#000;transform:scaleX(1.0188);">Tools</span>
<div style="left:339.70px;top:86.80px;width:14.47px;height:2.00px;background:#000;"></div>
<span style="left:422.10px;top:65.30px;font-size:23.26px;line-height:23.26px;font-weight:normal;color:#000;transform:scaleX(1.0258);">Window</span>
<div style="left:422.10px;top:86.80px;width:22.52px;height:2.00px;background:#000;"></div>
<span style="left:534.00px;top:65.30px;font-size:23.26px;line-height:23.26px;font-weight:normal;color:#000;transform:scaleX(0.9616);">Help</span>
<div style="left:534.00px;top:86.80px;width:16.15px;height:2.00px;background:#000;"></div>
<div style="left:935.50px;top:0.00px;width:1.50px;height:56.00px;background:#0030b0;"></div>
<div style="left:0.00px;top:101.00px;width:937.00px;height:1.50px;background:#c9c6b6;"></div>
<div style="left:0.00px;top:102.50px;width:937.00px;height:2.50px;background:#fff;"></div>
<div style="left:0.00px;top:105.00px;width:937.00px;height:52.00px;background:#ECE9D8;"></div>
<svg style="left:6.00px;top:117.00px;" width="35.00" height="26.00" viewBox="0 0 28 32" preserveAspectRatio="none"><path d="M1 1h11l4 4v17H1z" fill="#fff" stroke="#000" stroke-width="2"/><path d="M4 9h6M4 13h8M4 17h8" stroke="#000" stroke-width="1.6"/><path d="M12 10h10l5 5v16H12z" fill="#fff" stroke="#000080" stroke-width="2"/><path d="M15 18h6M15 22h9M15 26h9" stroke="#000080" stroke-width="1.6"/></svg>
<svg style="left:57.00px;top:117.00px;" width="22.00" height="28.00" viewBox="0 0 22 28" preserveAspectRatio="none"><rect x="0" y="3" width="22" height="25" rx="4" fill="#aca899"/><path d="M8 8h14" stroke="#fff" stroke-width="1.5"/></svg>
<svg style="left:917.00px;top:116.00px;" width="20.00" height="31.00" viewBox="0 0 20 31" preserveAspectRatio="none"><rect width="20" height="31" fill="#f2f070"/><path d="M0 1h20" stroke="#000" stroke-width="2" stroke-dasharray="2 1.5"/><path d="M0 30h20" stroke="#222" stroke-width="2"/><path d="M2 10l12 6-12 6" stroke="#1a1aff" stroke-width="2.5" fill="none"/></svg>
<div style="left:0.00px;top:157.00px;width:937.00px;height:9.00px;background:linear-gradient(180deg,#d0cdbc 0%,#aca899 35%,#8a8778 70%,#74715f 100%);"></div>
<div style="left:0.00px;top:166.00px;width:937.00px;height:639.00px;background:#fff;"></div>
<div style="left:0.00px;top:204.50px;width:937.00px;height:2.20px;background:#ACA899;"></div>
<div style="left:0.00px;top:247.20px;width:937.00px;height:2.20px;background:#ACA899;"></div>
<div style="left:0.00px;top:290.10px;width:937.00px;height:2.20px;background:#C6C6C6;"></div>
<div style="left:0.00px;top:332.77px;width:937.00px;height:2.20px;background:#C6C6C6;"></div>
<div style="left:0.00px;top:375.44px;width:937.00px;height:2.20px;background:#C6C6C6;"></div>
<div style="left:0.00px;top:418.11px;width:937.00px;height:2.20px;background:#C6C6C6;"></div>
<div style="left:0.00px;top:460.78px;width:937.00px;height:2.20px;background:#C6C6C6;"></div>
<div style="left:0.00px;top:503.45px;width:937.00px;height:2.20px;background:#C6C6C6;"></div>
<div style="left:0.00px;top:546.12px;width:937.00px;height:2.20px;background:#C6C6C6;"></div>
<div style="left:0.00px;top:588.79px;width:937.00px;height:2.20px;background:#C6C6C6;"></div>
<div style="left:0.00px;top:631.46px;width:937.00px;height:2.20px;background:#C6C6C6;"></div>
<div style="left:0.00px;top:674.13px;width:937.00px;height:2.20px;background:#C6C6C6;"></div>
<div style="left:0.00px;top:716.80px;width:937.00px;height:2.20px;background:#C6C6C6;"></div>
<div style="left:0.00px;top:759.47px;width:937.00px;height:2.20px;background:#C6C6C6;"></div>
<div style="left:0.00px;top:802.14px;width:937.00px;height:2.20px;background:#C6C6C6;"></div>
<div style="left:97.70px;top:166.00px;width:2.20px;height:82.30px;background:#ACA899;"></div>
<div style="left:97.70px;top:248.30px;width:2.20px;height:556.00px;background:#C6C6C6;"></div>
<div style="left:236.60px;top:166.00px;width:2.20px;height:82.30px;background:#ACA899;"></div>
<div style="left:236.60px;top:248.30px;width:2.20px;height:556.00px;background:#C6C6C6;"></div>
<div style="left:376.40px;top:166.00px;width:2.20px;height:82.30px;background:#ACA899;"></div>
<div style="left:376.40px;top:248.30px;width:2.20px;height:556.00px;background:#C6C6C6;"></div>
<div style="left:515.90px;top:166.00px;width:2.20px;height:82.30px;background:#ACA899;"></div>
<div style="left:515.90px;top:248.30px;width:2.20px;height:556.00px;background:#C6C6C6;"></div>
<div style="left:655.10px;top:166.00px;width:2.20px;height:82.30px;background:#ACA899;"></div>
<div style="left:655.10px;top:248.30px;width:2.20px;height:556.00px;background:#C6C6C6;"></div>
<div style="left:794.70px;top:166.00px;width:2.20px;height:82.30px;background:#ACA899;"></div>
<div style="left:794.70px;top:248.30px;width:2.20px;height:556.00px;background:#C6C6C6;"></div>
<div style="left:934.30px;top:166.00px;width:2.20px;height:82.30px;background:#ACA899;"></div>
<div style="left:934.30px;top:248.30px;width:2.20px;height:556.00px;background:#C6C6C6;"></div>
<span style="left:15.00px;top:170.60px;font-size:28.49px;line-height:28.49px;font-weight:bold;color:#000;transform:scaleX(0.9064);">C2</span>
<span style="left:13.00px;top:210.70px;font-size:28.49px;line-height:28.49px;font-weight:bold;color:#000;transform:scaleX(0.8953);">DL</span>
<span style="left:75.40px;top:253.80px;font-size:28.65px;line-height:28.65px;font-weight:normal;color:#000;transform:scaleX(0.7846)">7</span>
<span style="left:59.20px;top:253.80px;font-size:28.65px;line-height:28.65px;font-weight:normal;color:#000;transform:scaleX(0.7846)">3</span>
<span style="left:49.63px;top:253.80px;font-size:28.65px;line-height:28.65px;font-weight:normal;color:#000;transform:scaleX(0.7846)">.</span>
<span style="left:33.80px;top:253.80px;font-size:28.65px;line-height:28.65px;font-weight:normal;color:#000;transform:scaleX(0.7846)">8</span>
<span style="left:17.60px;top:253.80px;font-size:28.65px;line-height:28.65px;font-weight:normal;color:#000;transform:scaleX(0.7846)">5</span>
<span style="left:215.80px;top:253.80px;font-size:28.65px;line-height:28.65px;font-weight:normal;color:#000;transform:scaleX(0.7846)">2</span>
<span style="left:199.60px;top:253.80px;font-size:28.65px;line-height:28.65px;font-weight:normal;color:#000;transform:scaleX(0.7846)">1</span>
<span style="left:190.03px;top:253.80px;font-size:28.65px;line-height:28.65px;font-weight:normal;color:#000;transform:scaleX(0.7846)">.</span>
<span style="left:174.20px;top:253.80px;font-size:28.65px;line-height:28.65px;font-weight:normal;color:#000;transform:scaleX(0.7846)">5</span>
<span style="left:158.00px;top:253.80px;font-size:28.65px;line-height:28.65px;font-weight:normal;color:#000;transform:scaleX(0.7846)">4</span>
<span style="left:75.40px;top:296.47px;font-size:28.65px;line-height:28.65px;font-weight:normal;color:#000;transform:scaleX(0.7846)">5</span>
<span style="left:59.20px;top:296.47px;font-size:28.65px;line-height:28.65px;font-weight:normal;color:#000;transform:scaleX(0.7846)">9</span>
<span style="left:49.63px;top:296.47px;font-size:28.65px;line-height:28.65px;font-weight:normal;color:#000;transform:scaleX(0.7846)">.</span>
<span style="left:33.80px;top:296.47px;font-size:28.65px;line-height:28.65px;font-weight:normal;color:#000;transform:scaleX(0.7846)">4</span>
<span style="left:17.60px;top:296.47px;font-size:28.65px;line-height:28.65px;font-weight:normal;color:#000;transform:scaleX(0.7846)">5</span>
<span style="left:215.80px;top:296.47px;font-size:28.65px;line-height:28.65px;font-weight:normal;color:#000;transform:scaleX(0.7846)">5</span>
<span style="left:199.60px;top:296.47px;font-size:28.65px;line-height:28.65px;font-weight:normal;color:#000;transform:scaleX(0.7846)">3</span>
<span style="left:190.03px;top:296.47px;font-size:28.65px;line-height:28.65px;font-weight:normal;color:#000;transform:scaleX(0.7846)">.</span>
<span style="left:174.20px;top:296.47px;font-size:28.65px;line-height:28.65px;font-weight:normal;color:#000;transform:scaleX(0.7846)">4</span>
<span style="left:158.00px;top:296.47px;font-size:28.65px;line-height:28.65px;font-weight:normal;color:#000;transform:scaleX(0.7846)">4</span>
<span style="left:75.40px;top:339.14px;font-size:28.65px;line-height:28.65px;font-weight:normal;color:#000;transform:scaleX(0.7846)">8</span>
<span style="left:59.20px;top:339.14px;font-size:28.65px;line-height:28.65px;font-weight:normal;color:#000;transform:scaleX(0.7846)">5</span>
<span style="left:49.63px;top:339.14px;font-size:28.65px;line-height:28.65px;font-weight:normal;color:#000;transform:scaleX(0.7846)">.</span>
<span style="left:33.80px;top:339.14px;font-size:28.65px;line-height:28.65px;font-weight:normal;color:#000;transform:scaleX(0.7846)">0</span>
<span style="left:17.60px;top:339.14px;font-size:28.65px;line-height:28.65px;font-weight:normal;color:#000;transform:scaleX(0.7846)">6</span>
<span style="left:215.80px;top:339.14px;font-size:28.65px;line-height:28.65px;font-weight:normal;color:#000;transform:scaleX(0.7846)">6</span>
<span style="left:199.60px;top:339.14px;font-size:28.65px;line-height:28.65px;font-weight:normal;color:#000;transform:scaleX(0.7846)">5</span>
<span style="left:190.03px;top:339.14px;font-size:28.65px;line-height:28.65px;font-weight:normal;color:#000;transform:scaleX(0.7846)">.</span>
<span style="left:174.20px;top:339.14px;font-size:28.65px;line-height:28.65px;font-weight:normal;color:#000;transform:scaleX(0.7846)">5</span>
<span style="left:158.00px;top:339.14px;font-size:28.65px;line-height:28.65px;font-weight:normal;color:#000;transform:scaleX(0.7846)">4</span>
<span style="left:75.40px;top:381.81px;font-size:28.65px;line-height:28.65px;font-weight:normal;color:#000;transform:scaleX(0.7846)">3</span>
<span style="left:59.20px;top:381.81px;font-size:28.65px;line-height:28.65px;font-weight:normal;color:#000;transform:scaleX(0.7846)">7</span>
<span style="left:49.63px;top:381.81px;font-size:28.65px;line-height:28.65px;font-weight:normal;color:#000;transform:scaleX(0.7846)">.</span>
<span style="left:33.80px;top:381.81px;font-size:28.65px;line-height:28.65px;font-weight:normal;color:#000;transform:scaleX(0.7846)">6</span>
<span style="left:17.60px;top:381.81px;font-size:28.65px;line-height:28.65px;font-weight:normal;color:#000;transform:scaleX(0.7846)">5</span>
<span style="left:215.80px;top:381.81px;font-size:28.65px;line-height:28.65px;font-weight:normal;color:#000;transform:scaleX(0.7846)">4</span>
<span style="left:199.60px;top:381.81px;font-size:28.65px;line-height:28.65px;font-weight:normal;color:#000;transform:scaleX(0.7846)">3</span>
<span style="left:190.03px;top:381.81px;font-size:28.65px;line-height:28.65px;font-weight:normal;color:#000;transform:scaleX(0.7846)">.</span>
<span style="left:174.20px;top:381.81px;font-size:28.65px;line-height:28.65px;font-weight:normal;color:#000;transform:scaleX(0.7846)">4</span>
<span style="left:158.00px;top:381.81px;font-size:28.65px;line-height:28.65px;font-weight:normal;color:#000;transform:scaleX(0.7846)">4</span>
<span style="left:75.40px;top:424.48px;font-size:28.65px;line-height:28.65px;font-weight:normal;color:#000;transform:scaleX(0.7846)">6</span>
<span style="left:59.20px;top:424.48px;font-size:28.65px;line-height:28.65px;font-weight:normal;color:#000;transform:scaleX(0.7846)">3</span>
<span style="left:49.63px;top:424.48px;font-size:28.65px;line-height:28.65px;font-weight:normal;color:#000;transform:scaleX(0.7846)">.</span>
<span style="left:33.80px;top:424.48px;font-size:28.65px;line-height:28.65px;font-weight:normal;color:#000;transform:scaleX(0.7846)">7</span>
<span style="left:17.60px;top:424.48px;font-size:28.65px;line-height:28.65px;font-weight:normal;color:#000;transform:scaleX(0.7846)">5</span>
<span style="left:215.80px;top:424.48px;font-size:28.65px;line-height:28.65px;font-weight:normal;color:#000;transform:scaleX(0.7846)">7</span>
<span style="left:199.60px;top:424.48px;font-size:28.65px;line-height:28.65px;font-weight:normal;color:#000;transform:scaleX(0.7846)">5</span>
<span style="left:190.03px;top:424.48px;font-size:28.65px;line-height:28.65px;font-weight:normal;color:#000;transform:scaleX(0.7846)">.</span>
<span style="left:174.20px;top:424.48px;font-size:28.65px;line-height:28.65px;font-weight:normal;color:#000;transform:scaleX(0.7846)">3</span>
<span style="left:158.00px;top:424.48px;font-size:28.65px;line-height:28.65px;font-weight:normal;color:#000;transform:scaleX(0.7846)">4</span>
<span style="left:75.40px;top:467.15px;font-size:28.65px;line-height:28.65px;font-weight:normal;color:#000;transform:scaleX(0.7846)">6</span>
<span style="left:59.20px;top:467.15px;font-size:28.65px;line-height:28.65px;font-weight:normal;color:#000;transform:scaleX(0.7846)">2</span>
<span style="left:49.63px;top:467.15px;font-size:28.65px;line-height:28.65px;font-weight:normal;color:#000;transform:scaleX(0.7846)">.</span>
<span style="left:33.80px;top:467.15px;font-size:28.65px;line-height:28.65px;font-weight:normal;color:#000;transform:scaleX(0.7846)">3</span>
<span style="left:17.60px;top:467.15px;font-size:28.65px;line-height:28.65px;font-weight:normal;color:#000;transform:scaleX(0.7846)">5</span>
<span style="left:215.80px;top:467.15px;font-size:28.65px;line-height:28.65px;font-weight:normal;color:#000;transform:scaleX(0.7846)">6</span>
<span style="left:199.60px;top:467.15px;font-size:28.65px;line-height:28.65px;font-weight:normal;color:#000;transform:scaleX(0.7846)">8</span>
<span style="left:190.03px;top:467.15px;font-size:28.65px;line-height:28.65px;font-weight:normal;color:#000;transform:scaleX(0.7846)">.</span>
<span style="left:174.20px;top:467.15px;font-size:28.65px;line-height:28.65px;font-weight:normal;color:#000;transform:scaleX(0.7846)">4</span>
<span style="left:158.00px;top:467.15px;font-size:28.65px;line-height:28.65px;font-weight:normal;color:#000;transform:scaleX(0.7846)">4</span>
<span style="left:75.40px;top:509.82px;font-size:28.65px;line-height:28.65px;font-weight:normal;color:#000;transform:scaleX(0.7846)">7</span>
<span style="left:59.20px;top:509.82px;font-size:28.65px;line-height:28.65px;font-weight:normal;color:#000;transform:scaleX(0.7846)">0</span>
<span style="left:49.63px;top:509.82px;font-size:28.65px;line-height:28.65px;font-weight:normal;color:#000;transform:scaleX(0.7846)">.</span>
<span style="left:33.80px;top:509.82px;font-size:28.65px;line-height:28.65px;font-weight:normal;color:#000;transform:scaleX(0.7846)">7</span>
<span style="left:17.60px;top:509.82px;font-size:28.65px;line-height:28.65px;font-weight:normal;color:#000;transform:scaleX(0.7846)">5</span>
<span style="left:215.80px;top:509.82px;font-size:28.65px;line-height:28.65px;font-weight:normal;color:#000;transform:scaleX(0.7846)">7</span>
<span style="left:199.60px;top:509.82px;font-size:28.65px;line-height:28.65px;font-weight:normal;color:#000;transform:scaleX(0.7846)">2</span>
<span style="left:190.03px;top:509.82px;font-size:28.65px;line-height:28.65px;font-weight:normal;color:#000;transform:scaleX(0.7846)">.</span>
<span style="left:174.20px;top:509.82px;font-size:28.65px;line-height:28.65px;font-weight:normal;color:#000;transform:scaleX(0.7846)">6</span>
<span style="left:158.00px;top:509.82px;font-size:28.65px;line-height:28.65px;font-weight:normal;color:#000;transform:scaleX(0.7846)">4</span>
<span style="left:75.40px;top:552.49px;font-size:28.65px;line-height:28.65px;font-weight:normal;color:#000;transform:scaleX(0.7846)">7</span>
<span style="left:59.20px;top:552.49px;font-size:28.65px;line-height:28.65px;font-weight:normal;color:#000;transform:scaleX(0.7846)">1</span>
<span style="left:49.63px;top:552.49px;font-size:28.65px;line-height:28.65px;font-weight:normal;color:#000;transform:scaleX(0.7846)">.</span>
<span style="left:33.80px;top:552.49px;font-size:28.65px;line-height:28.65px;font-weight:normal;color:#000;transform:scaleX(0.7846)">8</span>
<span style="left:17.60px;top:552.49px;font-size:28.65px;line-height:28.65px;font-weight:normal;color:#000;transform:scaleX(0.7846)">5</span>
<span style="left:215.80px;top:552.49px;font-size:28.65px;line-height:28.65px;font-weight:normal;color:#000;transform:scaleX(0.7846)">2</span>
<span style="left:199.60px;top:552.49px;font-size:28.65px;line-height:28.65px;font-weight:normal;color:#000;transform:scaleX(0.7846)">8</span>
<span style="left:190.03px;top:552.49px;font-size:28.65px;line-height:28.65px;font-weight:normal;color:#000;transform:scaleX(0.7846)">.</span>
<span style="left:174.20px;top:552.49px;font-size:28.65px;line-height:28.65px;font-weight:normal;color:#000;transform:scaleX(0.7846)">2</span>
<span style="left:158.00px;top:552.49px;font-size:28.65px;line-height:28.65px;font-weight:normal;color:#000;transform:scaleX(0.7846)">4</span>
<span style="left:75.40px;top:595.16px;font-size:28.65px;line-height:28.65px;font-weight:normal;color:#000;transform:scaleX(0.7846)">8</span>
<span style="left:59.20px;top:595.16px;font-size:28.65px;line-height:28.65px;font-weight:normal;color:#000;transform:scaleX(0.7846)">2</span>
<span style="left:49.63px;top:595.16px;font-size:28.65px;line-height:28.65px;font-weight:normal;color:#000;transform:scaleX(0.7846)">.</span>
<span style="left:33.80px;top:595.16px;font-size:28.65px;line-height:28.65px;font-weight:normal;color:#000;transform:scaleX(0.7846)">2</span>
<span style="left:17.60px;top:595.16px;font-size:28.65px;line-height:28.65px;font-weight:normal;color:#000;transform:scaleX(0.7846)">5</span>
<span style="left:215.80px;top:595.16px;font-size:28.65px;line-height:28.65px;font-weight:normal;color:#000;transform:scaleX(0.7846)">1</span>
<span style="left:199.60px;top:595.16px;font-size:28.65px;line-height:28.65px;font-weight:normal;color:#000;transform:scaleX(0.7846)">9</span>
<span style="left:190.03px;top:595.16px;font-size:28.65px;line-height:28.65px;font-weight:normal;color:#000;transform:scaleX(0.7846)">.</span>
<span style="left:174.20px;top:595.16px;font-size:28.65px;line-height:28.65px;font-weight:normal;color:#000;transform:scaleX(0.7846)">1</span>
<span style="left:158.00px;top:595.16px;font-size:28.65px;line-height:28.65px;font-weight:normal;color:#000;transform:scaleX(0.7846)">4</span>
<span style="left:75.40px;top:637.83px;font-size:28.65px;line-height:28.65px;font-weight:normal;color:#000;transform:scaleX(0.7846)">2</span>
<span style="left:59.20px;top:637.83px;font-size:28.65px;line-height:28.65px;font-weight:normal;color:#000;transform:scaleX(0.7846)">6</span>
<span style="left:49.63px;top:637.83px;font-size:28.65px;line-height:28.65px;font-weight:normal;color:#000;transform:scaleX(0.7846)">.</span>
<span style="left:33.80px;top:637.83px;font-size:28.65px;line-height:28.65px;font-weight:normal;color:#000;transform:scaleX(0.7846)">5</span>
<span style="left:17.60px;top:637.83px;font-size:28.65px;line-height:28.65px;font-weight:normal;color:#000;transform:scaleX(0.7846)">5</span>
<span style="left:215.80px;top:637.83px;font-size:28.65px;line-height:28.65px;font-weight:normal;color:#000;transform:scaleX(0.7846)">5</span>
<span style="left:199.60px;top:637.83px;font-size:28.65px;line-height:28.65px;font-weight:normal;color:#000;transform:scaleX(0.7846)">9</span>
<span style="left:190.03px;top:637.83px;font-size:28.65px;line-height:28.65px;font-weight:normal;color:#000;transform:scaleX(0.7846)">.</span>
<span style="left:174.20px;top:637.83px;font-size:28.65px;line-height:28.65px;font-weight:normal;color:#000;transform:scaleX(0.7846)">4</span>
<span style="left:158.00px;top:637.83px;font-size:28.65px;line-height:28.65px;font-weight:normal;color:#000;transform:scaleX(0.7846)">4</span>
<span style="left:75.40px;top:680.50px;font-size:28.65px;line-height:28.65px;font-weight:normal;color:#000;transform:scaleX(0.7846)">2</span>
<span style="left:59.20px;top:680.50px;font-size:28.65px;line-height:28.65px;font-weight:normal;color:#000;transform:scaleX(0.7846)">8</span>
<span style="left:49.63px;top:680.50px;font-size:28.65px;line-height:28.65px;font-weight:normal;color:#000;transform:scaleX(0.7846)">.</span>
<span style="left:33.80px;top:680.50px;font-size:28.65px;line-height:28.65px;font-weight:normal;color:#000;transform:scaleX(0.7846)">6</span>
<span style="left:17.60px;top:680.50px;font-size:28.65px;line-height:28.65px;font-weight:normal;color:#000;transform:scaleX(0.7846)">5</span>
<span style="left:215.80px;top:680.50px;font-size:28.65px;line-height:28.65px;font-weight:normal;color:#000;transform:scaleX(0.7846)">9</span>
<span style="left:199.60px;top:680.50px;font-size:28.65px;line-height:28.65px;font-weight:normal;color:#000;transform:scaleX(0.7846)">7</span>
<span style="left:190.03px;top:680.50px;font-size:28.65px;line-height:28.65px;font-weight:normal;color:#000;transform:scaleX(0.7846)">.</span>
<span style="left:174.20px;top:680.50px;font-size:28.65px;line-height:28.65px;font-weight:normal;color:#000;transform:scaleX(0.7846)">4</span>
<span style="left:158.00px;top:680.50px;font-size:28.65px;line-height:28.65px;font-weight:normal;color:#000;transform:scaleX(0.7846)">4</span>
<span style="left:75.40px;top:723.17px;font-size:28.65px;line-height:28.65px;font-weight:normal;color:#000;transform:scaleX(0.7846)">5</span>
<span style="left:59.20px;top:723.17px;font-size:28.65px;line-height:28.65px;font-weight:normal;color:#000;transform:scaleX(0.7846)">1</span>
<span style="left:49.63px;top:723.17px;font-size:28.65px;line-height:28.65px;font-weight:normal;color:#000;transform:scaleX(0.7846)">.</span>
<span style="left:33.80px;top:723.17px;font-size:28.65px;line-height:28.65px;font-weight:normal;color:#000;transform:scaleX(0.7846)">1</span>
<span style="left:17.60px;top:723.17px;font-size:28.65px;line-height:28.65px;font-weight:normal;color:#000;transform:scaleX(0.7846)">6</span>
<span style="left:215.80px;top:723.17px;font-size:28.65px;line-height:28.65px;font-weight:normal;color:#000;transform:scaleX(0.7846)">0</span>
<span style="left:199.60px;top:723.17px;font-size:28.65px;line-height:28.65px;font-weight:normal;color:#000;transform:scaleX(0.7846)">0</span>
<span style="left:190.03px;top:723.17px;font-size:28.65px;line-height:28.65px;font-weight:normal;color:#000;transform:scaleX(0.7846)">.</span>
<span style="left:174.20px;top:723.17px;font-size:28.65px;line-height:28.65px;font-weight:normal;color:#000;transform:scaleX(0.7846)">6</span>
<span style="left:158.00px;top:723.17px;font-size:28.65px;line-height:28.65px;font-weight:normal;color:#000;transform:scaleX(0.7846)">4</span>
<span style="left:75.40px;top:765.84px;font-size:28.65px;line-height:28.65px;font-weight:normal;color:#000;transform:scaleX(0.7846)">4</span>
<span style="left:59.20px;top:765.84px;font-size:28.65px;line-height:28.65px;font-weight:normal;color:#000;transform:scaleX(0.7846)">2</span>
<span style="left:49.63px;top:765.84px;font-size:28.65px;line-height:28.65px;font-weight:normal;color:#000;transform:scaleX(0.7846)">.</span>
<span style="left:33.80px;top:765.84px;font-size:28.65px;line-height:28.65px;font-weight:normal;color:#000;transform:scaleX(0.7846)">4</span>
<span style="left:17.60px;top:765.84px;font-size:28.65px;line-height:28.65px;font-weight:normal;color:#000;transform:scaleX(0.7846)">5</span>
<span style="left:215.80px;top:765.84px;font-size:28.65px;line-height:28.65px;font-weight:normal;color:#000;transform:scaleX(0.7846)">8</span>
<span style="left:199.60px;top:765.84px;font-size:28.65px;line-height:28.65px;font-weight:normal;color:#000;transform:scaleX(0.7846)">5</span>
<span style="left:190.03px;top:765.84px;font-size:28.65px;line-height:28.65px;font-weight:normal;color:#000;transform:scaleX(0.7846)">.</span>
<span style="left:174.20px;top:765.84px;font-size:28.65px;line-height:28.65px;font-weight:normal;color:#000;transform:scaleX(0.7846)">2</span>
<span style="left:158.00px;top:765.84px;font-size:28.65px;line-height:28.65px;font-weight:normal;color:#000;transform:scaleX(0.7846)">4</span>
</div>
<div style="left:579.00px;top:337.00px;width:356.00px;height:591.00px;background:#ECE9D8;"></div>
<div style="left:579.00px;top:337.00px;width:356.00px;height:2.00px;background:#f4f2ea;"></div>
<div style="left:580.50px;top:338.00px;width:353.00px;height:2.00px;background:#fff;"></div>
<div style="left:579.00px;top:337.00px;width:1.50px;height:591.00px;background:#f4f2ea;"></div>
<div style="left:580.50px;top:338.00px;width:3.00px;height:588.00px;background:#fff;"></div>
<div style="left:933.50px;top:337.00px;width:1.50px;height:591.00px;background:#716f64;"></div>
<div style="left:932.50px;top:338.50px;width:1.00px;height:588.00px;background:#ACA899;"></div>
<div style="left:579.00px;top:925.00px;width:356.00px;height:3.00px;background:#716f64;"></div>
<div style="left:581.00px;top:923.50px;width:352.00px;height:1.50px;background:#ACA899;"></div>
<div style="left:585.50px;top:343.00px;width:345.00px;height:41.00px;background:#316AC5;"></div>
<span style="left:642.00px;top:351.60px;font-size:23.98px;line-height:23.98px;font-weight:normal;color:#fff;transform:scaleX(0.9848);">Basic Statistics</span>
<div style="left:642.00px;top:374.10px;width:15.75px;height:2.00px;background:#fff;"></div>
<svg style="left:914.00px;top:355.10px;" width="10.40" height="15.00" viewBox="0 0 10 15" preserveAspectRatio="none"><path d="M0 0L10 7.5 0 15z" fill="#fff"/></svg>
<span style="left:642.00px;top:396.28px;font-size:23.98px;line-height:23.98px;font-weight:normal;color:#000;transform:scaleX(0.9860);">Regression</span>
<div style="left:642.00px;top:418.78px;width:17.08px;height:2.00px;background:#000;"></div>
<svg style="left:914.00px;top:399.78px;" width="10.40" height="15.00" viewBox="0 0 10 15" preserveAspectRatio="none"><path d="M0 0L10 7.5 0 15z" fill="#000"/></svg>
<span style="left:642.00px;top:440.96px;font-size:23.98px;line-height:23.98px;font-weight:normal;color:#000;transform:scaleX(0.9612);">ANOVA</span>
<div style="left:642.00px;top:463.46px;width:15.38px;height:2.00px;background:#000;"></div>
<svg style="left:914.00px;top:444.46px;" width="10.40" height="15.00" viewBox="0 0 10 15" preserveAspectRatio="none"><path d="M0 0L10 7.5 0 15z" fill="#000"/></svg>
<span style="left:642.00px;top:485.64px;font-size:23.98px;line-height:23.98px;font-weight:normal;color:#000;transform:scaleX(0.8986);">DOE</span>
<div style="left:642.00px;top:508.14px;width:15.56px;height:2.00px;background:#000;"></div>
<svg style="left:914.00px;top:489.14px;" width="10.40" height="15.00" viewBox="0 0 10 15" preserveAspectRatio="none"><path d="M0 0L10 7.5 0 15z" fill="#000"/></svg>
<span style="left:642.00px;top:530.32px;font-size:23.98px;line-height:23.98px;font-weight:normal;color:#000;transform:scaleX(1.0271);">Control Charts</span>
<div style="left:642.00px;top:552.82px;width:17.79px;height:2.00px;background:#000;"></div>
<svg style="left:914.00px;top:533.82px;" width="10.40" height="15.00" viewBox="0 0 10 15" preserveAspectRatio="none"><path d="M0 0L10 7.5 0 15z" fill="#000"/></svg>
<span style="left:642.00px;top:575.00px;font-size:23.98px;line-height:23.98px;font-weight:normal;color:#000;transform:scaleX(1.0258);">Quality Tools</span>
<div style="left:642.00px;top:597.50px;width:19.14px;height:2.00px;background:#000;"></div>
<svg style="left:914.00px;top:578.50px;" width="10.40" height="15.00" viewBox="0 0 10 15" preserveAspectRatio="none"><path d="M0 0L10 7.5 0 15z" fill="#000"/></svg>
<span style="left:642.00px;top:619.68px;font-size:23.98px;line-height:23.98px;font-weight:normal;color:#000;transform:scaleX(1.0149);">Reliability/Survival</span>
<div style="left:678.52px;top:642.18px;width:5.41px;height:2.00px;background:#000;"></div>
<svg style="left:914.00px;top:623.18px;" width="10.40" height="15.00" viewBox="0 0 10 15" preserveAspectRatio="none"><path d="M0 0L10 7.5 0 15z" fill="#000"/></svg>
<span style="left:642.00px;top:664.36px;font-size:23.98px;line-height:23.98px;font-weight:normal;color:#000;transform:scaleX(1.0332);">Multivariate</span>
<div style="left:642.00px;top:686.86px;width:20.64px;height:2.00px;background:#000;"></div>
<svg style="left:914.00px;top:667.86px;" width="10.40" height="15.00" viewBox="0 0 10 15" preserveAspectRatio="none"><path d="M0 0L10 7.5 0 15z" fill="#000"/></svg>
<span style="left:642.00px;top:709.04px;font-size:23.98px;line-height:23.98px;font-weight:normal;color:#000;transform:scaleX(0.9611);">Time Series</span>
<div style="left:698.77px;top:731.54px;width:15.37px;height:2.00px;background:#000;"></div>
<svg style="left:914.00px;top:712.54px;" width="10.40" height="15.00" viewBox="0 0 10 15" preserveAspectRatio="none"><path d="M0 0L10 7.5 0 15z" fill="#000"/></svg>
<span style="left:642.00px;top:753.72px;font-size:23.98px;line-height:23.98px;font-weight:normal;color:#000;transform:scaleX(0.9995);">Tables</span>
<div style="left:642.00px;top:776.22px;width:14.64px;height:2.00px;background:#000;"></div>
<svg style="left:914.00px;top:757.22px;" width="10.40" height="15.00" viewBox="0 0 10 15" preserveAspectRatio="none"><path d="M0 0L10 7.5 0 15z" fill="#000"/></svg>
<span style="left:642.00px;top:798.40px;font-size:23.98px;line-height:23.98px;font-weight:normal;color:#000;transform:scaleX(1.0055);">Nonparametrics</span>
<div style="left:642.00px;top:820.90px;width:17.41px;height:2.00px;background:#000;"></div>
<svg style="left:914.00px;top:801.90px;" width="10.40" height="15.00" viewBox="0 0 10 15" preserveAspectRatio="none"><path d="M0 0L10 7.5 0 15z" fill="#000"/></svg>
<span style="left:642.00px;top:843.08px;font-size:23.98px;line-height:23.98px;font-weight:normal;color:#000;transform:scaleX(0.9086);">EDA</span>
<div style="left:642.00px;top:865.58px;width:14.53px;height:2.00px;background:#000;"></div>
<svg style="left:914.00px;top:846.58px;" width="10.40" height="15.00" viewBox="0 0 10 15" preserveAspectRatio="none"><path d="M0 0L10 7.5 0 15z" fill="#000"/></svg>
<span style="left:642.00px;top:887.76px;font-size:23.98px;line-height:23.98px;font-weight:normal;color:#000;transform:scaleX(0.9768);">Power and Sample Size</span>
<div style="left:642.00px;top:910.26px;width:15.62px;height:2.00px;background:#000;"></div>
<svg style="left:914.00px;top:891.26px;" width="10.40" height="15.00" viewBox="0 0 10 15" preserveAspectRatio="none"><path d="M0 0L10 7.5 0 15z" fill="#000"/></svg>
<div style="left:935.00px;top:336.00px;width:487.00px;height:675.00px;background:#ECE9D8;"></div>
<div style="left:935.00px;top:336.00px;width:487.00px;height:1.50px;background:#f4f2ea;"></div>
<div style="left:936.50px;top:337.50px;width:484.00px;height:2.00px;background:#fff;"></div>
<div style="left:935.00px;top:336.00px;width:1.50px;height:675.00px;background:#d8d5c6;"></div>
<div style="left:936.50px;top:337.50px;width:2.00px;height:672.00px;background:#fff;"></div>
<div style="left:1420.00px;top:336.00px;width:2.00px;height:675.00px;background:#716f64;"></div>
<div style="left:1418.00px;top:338.00px;width:2.00px;height:671.00px;background:#ACA899;"></div>
<div style="left:935.00px;top:1008.50px;width:487.00px;height:2.50px;background:#716f64;"></div>
<div style="left:937.00px;top:1006.50px;width:483.00px;height:2.00px;background:#ACA899;"></div>
<div style="left:965.00px;top:483.25px;width:430.00px;height:1.50px;background:#ACA899;"></div>
<div style="left:965.00px;top:484.75px;width:430.00px;height:1.50px;background:#fff;"></div>
<div style="left:965.00px;top:678.45px;width:430.00px;height:1.50px;background:#ACA899;"></div>
<div style="left:965.00px;top:679.95px;width:430.00px;height:1.50px;background:#fff;"></div>
<div style="left:965.00px;top:784.25px;width:430.00px;height:1.50px;background:#ACA899;"></div>
<div style="left:965.00px;top:785.75px;width:430.00px;height:1.50px;background:#fff;"></div>
<div style="left:965.00px;top:845.05px;width:430.00px;height:1.50px;background:#ACA899;"></div>
<div style="left:965.00px;top:846.55px;width:430.00px;height:1.50px;background:#fff;"></div>
<div style="left:965.00px;top:950.95px;width:430.00px;height:1.50px;background:#ACA899;"></div>
<div style="left:965.00px;top:952.45px;width:430.00px;height:1.50px;background:#fff;"></div>
<div style="left:990.00px;top:857.50px;width:425.40px;height:40.30px;background:#316AC5;"></div>
<div style="left:942.50px;top:857.50px;width:44.20px;height:40.00px;background:#ECE9D8;box-sizing:border-box;border-top:1.5px solid #fff;border-left:1.5px solid #fff;border-right:1.5px solid #aca899;border-bottom:1.5px solid #aca899;"></div>
<span style="left:999.50px;top:354.30px;font-size:23.69px;line-height:23.69px;font-weight:normal;color:#000;transform:scaleX(1.0191);">Display Descriptive Statistics</span>
<div style="left:999.50px;top:375.80px;width:17.44px;height:2.00px;background:#000;"></div>
<div style="left:1312.00px;top:369.00px;width:3.00px;height:4.00px;background:#000;"></div>
<div style="left:1322.00px;top:369.00px;width:3.00px;height:4.00px;background:#000;"></div>
<div style="left:1331.00px;top:369.00px;width:3.00px;height:4.00px;background:#000;"></div>
<span style="left:999.50px;top:399.00px;font-size:23.69px;line-height:23.69px;font-weight:normal;color:#000;transform:scaleX(1.0306);">Store Descriptive Statistics</span>
<div style="left:999.50px;top:420.50px;width:16.29px;height:2.00px;background:#000;"></div>
<div style="left:1294.00px;top:414.00px;width:3.00px;height:4.00px;background:#000;"></div>
<div style="left:1303.00px;top:414.00px;width:3.00px;height:4.00px;background:#000;"></div>
<div style="left:1313.00px;top:414.00px;width:3.00px;height:4.00px;background:#000;"></div>
<span style="left:999.50px;top:443.30px;font-size:23.69px;line-height:23.69px;font-weight:normal;color:#000;transform:scaleX(0.9855);">Graphical Summary</span>
<div style="left:999.50px;top:464.80px;width:18.16px;height:2.00px;background:#000;"></div>
<div style="left:1210.00px;top:458.00px;width:3.00px;height:4.00px;background:#000;"></div>
<div style="left:1219.00px;top:458.00px;width:3.00px;height:4.00px;background:#000;"></div>
<div style="left:1228.00px;top:458.00px;width:3.00px;height:4.00px;background:#000;"></div>
<span style="left:999.50px;top:504.90px;font-size:23.69px;line-height:23.69px;font-weight:normal;color:#000;transform:scaleX(0.9693);">1-Sample Z</span>
<div style="left:1104.16px;top:526.40px;width:14.03px;height:2.00px;background:#000;"></div>
<div style="left:1123.00px;top:520.00px;width:3.00px;height:4.00px;background:#000;"></div>
<div style="left:1132.00px;top:520.00px;width:3.00px;height:4.00px;background:#000;"></div>
<div style="left:1141.00px;top:520.00px;width:3.00px;height:4.00px;background:#000;"></div>
<span style="left:999.50px;top:549.70px;font-size:23.69px;line-height:23.69px;font-weight:normal;color:#000;transform:scaleX(0.9926);">1-Sample t</span>
<div style="left:999.50px;top:571.20px;width:13.08px;height:2.00px;background:#000;"></div>
<div style="left:1118.00px;top:565.00px;width:3.00px;height:4.00px;background:#000;"></div>
<div style="left:1127.00px;top:565.00px;width:3.00px;height:4.00px;background:#000;"></div>
<div style="left:1136.00px;top:565.00px;width:3.00px;height:4.00px;background:#000;"></div>
<span style="left:999.50px;top:594.40px;font-size:23.69px;line-height:23.69px;font-weight:normal;color:#000;transform:scaleX(0.9926);">2-Sample t</span>
<div style="left:999.50px;top:615.90px;width:13.08px;height:2.00px;background:#000;"></div>
<div style="left:1118.00px;top:609.00px;width:3.00px;height:4.00px;background:#000;"></div>
<div style="left:1127.00px;top:609.00px;width:3.00px;height:4.00px;background:#000;"></div>
<div style="left:1136.00px;top:609.00px;width:3.00px;height:4.00px;background:#000;"></div>
<span style="left:999.50px;top:638.20px;font-size:23.69px;line-height:23.69px;font-weight:normal;color:#000;transform:scaleX(1.0056);">Paired t</span>
<div style="left:999.50px;top:659.70px;width:15.89px;height:2.00px;background:#000;"></div>
<div style="left:1086.00px;top:653.00px;width:3.00px;height:4.00px;background:#000;"></div>
<div style="left:1095.00px;top:653.00px;width:3.00px;height:4.00px;background:#000;"></div>
<div style="left:1104.00px;top:653.00px;width:3.00px;height:4.00px;background:#000;"></div>
<span style="left:999.50px;top:700.20px;font-size:23.69px;line-height:23.69px;font-weight:normal;color:#000;transform:scaleX(1.0273);">1 Proportion</span>
<div style="left:1036.03px;top:721.70px;width:8.11px;height:2.00px;background:#000;"></div>
<div style="left:1136.00px;top:715.00px;width:3.00px;height:4.00px;background:#000;"></div>
<div style="left:1146.00px;top:715.00px;width:3.00px;height:4.00px;background:#000;"></div>
<div style="left:1155.00px;top:715.00px;width:3.00px;height:4.00px;background:#000;"></div>
<span style="left:999.50px;top:744.30px;font-size:23.69px;line-height:23.69px;font-weight:normal;color:#000;transform:scaleX(1.0226);">2 Proportions</span>
<div style="left:1043.93px;top:765.80px;width:13.47px;height:2.00px;background:#000;"></div>
<div style="left:1148.00px;top:759.00px;width:3.00px;height:4.00px;background:#000;"></div>
<div style="left:1157.00px;top:759.00px;width:3.00px;height:4.00px;background:#000;"></div>
<div style="left:1166.00px;top:759.00px;width:3.00px;height:4.00px;background:#000;"></div>
<span style="left:999.50px;top:805.20px;font-size:23.69px;line-height:23.69px;font-weight:normal;color:#000;transform:scaleX(1.0003);">2 Variances</span>
<div style="left:1035.07px;top:826.70px;width:11.42px;height:2.00px;background:#000;"></div>
<div style="left:1127.00px;top:820.00px;width:3.00px;height:4.00px;background:#000;"></div>
<div style="left:1136.00px;top:820.00px;width:3.00px;height:4.00px;background:#000;"></div>
<div style="left:1146.00px;top:820.00px;width:3.00px;height:4.00px;background:#000;"></div>
<span style="left:999.50px;top:866.30px;font-size:23.69px;line-height:23.69px;font-weight:normal;color:#fff;transform:scaleX(1.0295);">Correlation</span>
<div style="left:999.50px;top:887.80px;width:17.62px;height:2.00px;background:#fff;"></div>
<div style="left:1123.00px;top:881.00px;width:3.00px;height:4.00px;background:#fff;"></div>
<div style="left:1132.00px;top:881.00px;width:3.00px;height:4.00px;background:#fff;"></div>
<div style="left:1142.00px;top:881.00px;width:3.00px;height:4.00px;background:#fff;"></div>
<span style="left:999.50px;top:911.50px;font-size:23.69px;line-height:23.69px;font-weight:normal;color:#000;transform:scaleX(1.0164);">Covariance</span>
<div style="left:1030.28px;top:933.00px;width:12.04px;height:2.00px;background:#000;"></div>
<div style="left:1126.00px;top:926.00px;width:3.00px;height:4.00px;background:#000;"></div>
<div style="left:1135.00px;top:926.00px;width:3.00px;height:4.00px;background:#000;"></div>
<div style="left:1144.00px;top:926.00px;width:3.00px;height:4.00px;background:#000;"></div>
<span style="left:999.50px;top:976.00px;font-size:23.69px;line-height:23.69px;font-weight:normal;color:#000;transform:scaleX(1.0385);">Normality Test</span>
<div style="left:999.50px;top:997.50px;width:17.77px;height:2.00px;background:#000;"></div>
<div style="left:1159.00px;top:991.00px;width:3.00px;height:4.00px;background:#000;"></div>
<div style="left:1168.00px;top:991.00px;width:3.00px;height:4.00px;background:#000;"></div>
<div style="left:1178.00px;top:991.00px;width:3.00px;height:4.00px;background:#000;"></div>
<svg style="left:946.00px;top:349.00px;" width="38.00" height="33.00" viewBox="0 0 38 33" preserveAspectRatio="none"><path d="M1.5 3.5V1.5h15v2M1.5 3l15 13.5M16.5 3L1.5 16.5" stroke="#000" stroke-width="2.4" fill="none"/><path d="M34.5 21.3L33 19.8H22L20.2 21.5V24.5L22 26H33L34.8 27.5V30.6L33 32.1H22L20.2 30.6" stroke="#000" stroke-width="2.4" fill="none"/></svg>
<svg style="left:946.00px;top:392.00px;" width="38.00" height="35.00" viewBox="0 0 38 35" preserveAspectRatio="none"><path d="M1.5 4V2h15v2M1.5 3.5l15 13.5M16.5 3.5L1.5 17" stroke="#000" stroke-width="2.4" fill="none"/><path d="M36.5 3.3L35 1.8H24L22.2 3.5V6.5L24 8H35L36.8 9.5V12.6L35 14.1H24L22.2 12.6" stroke="#000" stroke-width="2.4" fill="none"/><path d="M6 27h11" stroke="#000" stroke-width="2.2"/><path d="M15 22.5l6 4.5-6 4.5z" fill="#000"/><path d="M25.7 18.3h4v4h-4zM33.8 18.3h4v4h-4zM25.7 24.5h4v4h-4zM33.8 24.5h4v4h-4zM25.7 30.7h4v4h-4zM33.8 30.7h4v4h-4z" fill="#008000"/></svg>
<svg style="left:946.00px;top:438.00px;" width="38.00" height="36.00" viewBox="0 0 38 36" preserveAspectRatio="none"><path d="M0.9 14.5V7H6V5.3H11V1.2H17V6.6H21V14.5Z" fill="#e0e0e0" stroke="#000" stroke-width="2"/><path d="M6 7v7.5M11 5.3v9.2M17 6.6v7.9" stroke="#000" stroke-width="1.6"/><path d="M0.7 22H21" stroke="#000" stroke-width="2"/><rect x="5" y="19" width="12" height="6" rx="1.5" fill="#d8d8d8" stroke="#000" stroke-width="2"/><path d="M3 30H19M3 27V33M19 27V33" stroke="#000" stroke-width="2.2"/><path d="M28 1.5h2.5v3H28zM33 1.5h2.5v3H33zM28 7h2.5v3H28zM33 7h2.5v3H33zM28 19h2.5v3H28zM33 19h2.5v3H33zM29 25h5v3h-5zM30 30h5v2.5h-5z" fill="#000"/><path d="M35.5 12.5L28 15.5 35.5 18.5z" fill="#000"/></svg>
<span style="left:948.20px;top:503.30px;font-size:30.09px;line-height:30.09px;font-weight:bold;color:#000;transform:scaleX(0.9456);">1Z</span>
<span style="left:950.90px;top:548.00px;font-size:30.09px;line-height:30.09px;font-weight:bold;color:#000080;transform:scaleX(1.1403);">1t</span>
<span style="left:946.50px;top:592.50px;font-size:29.66px;line-height:29.66px;font-weight:bold;color:#000080;transform:scaleX(1.3238);">2t</span>
<span style="left:947.60px;top:634.30px;font-size:32.21px;line-height:32.21px;font-weight:bold;color:#000080;transform:scaleX(1.2494);">t</span>
<span style="left:969.00px;top:634.30px;font-size:32.21px;line-height:32.21px;font-weight:bold;color:#000080;transform:scaleX(1.3519);">t</span>
<svg style="left:959.00px;top:651.00px;" width="10.00" height="6.00" viewBox="0 0 10 6" preserveAspectRatio="none"><path d="M0 3h10M3 0L0 3l3 3M7 0l3 3-3 3" stroke="#000080" stroke-width="1.5" fill="none"/></svg>
<span style="left:948.00px;top:697.30px;font-size:31.40px;line-height:31.40px;font-weight:bold;color:#800000;transform:scaleX(0.8673);">1P</span>
<span style="left:946.70px;top:741.50px;font-size:31.40px;line-height:31.40px;font-weight:bold;color:#800000;transform:scaleX(0.9532);">2P</span>
<svg style="left:947.00px;top:800.00px;" width="38.00" height="34.00" viewBox="0 0 38 34" preserveAspectRatio="none"><text x="0" y="15" font-family="Liberation Sans" font-weight="bold" font-size="16" fill="#000">σ</text><text x="10.5" y="17.5" font-family="Liberation Sans" font-weight="bold" font-size="10" fill="#000">1</text><text x="11" y="8" font-family="Liberation Sans" font-weight="bold" font-size="9" fill="#000">2</text><text x="18" y="30" font-family="Liberation Sans" font-weight="bold" font-size="16" fill="#000">σ</text><text x="28.5" y="33.5" font-family="Liberation Sans" font-weight="bold" font-size="10" fill="#000">2</text><text x="29" y="24" font-family="Liberation Sans" font-weight="bold" font-size="9" fill="#000">2</text></svg>
<div style="left:946.70px;top:863.30px;width:36.60px;height:4.20px;background:#ff0000;"></div>
<div style="left:946.70px;top:863.30px;width:3.00px;height:6.30px;background:#ff0000;"></div>
<div style="left:980.30px;top:863.30px;width:3.00px;height:6.30px;background:#ff0000;"></div>
<div style="left:946.70px;top:890.00px;width:36.60px;height:4.20px;background:#ff0000;"></div>
<div style="left:946.70px;top:888.00px;width:3.00px;height:6.20px;background:#ff0000;"></div>
<div style="left:980.30px;top:888.00px;width:3.00px;height:6.20px;background:#ff0000;"></div>
<span style="left:946.70px;top:868.80px;font-size:20.35px;line-height:20.35px;font-weight:normal;color:#000;transform:scaleX(0.8095);">COR</span>
<div style="left:946.70px;top:908.30px;width:36.60px;height:4.20px;background:#ff0000;"></div>
<div style="left:946.70px;top:908.30px;width:3.00px;height:6.30px;background:#ff0000;"></div>
<div style="left:980.30px;top:908.30px;width:3.00px;height:6.30px;background:#ff0000;"></div>
<div style="left:946.70px;top:935.00px;width:36.60px;height:4.20px;background:#ff0000;"></div>
<div style="left:946.70px;top:933.00px;width:3.00px;height:6.20px;background:#ff0000;"></div>
<div style="left:980.30px;top:933.00px;width:3.00px;height:6.20px;background:#ff0000;"></div>
<span style="left:946.70px;top:913.80px;font-size:20.35px;line-height:20.35px;font-weight:normal;color:#000;transform:scaleX(0.8300);">COV</span>
<svg style="left:946.30px;top:966.90px;" width="37.20" height="16.80" viewBox="0 0 37 17" preserveAspectRatio="none"><polygon fill="#0000ff" points="0,17 0,14.5 5,14.5 5,12.6 9.5,12.6 9.5,10.3 12,10.3 12,6.3 14.2,6.3 14.2,2.9 16.3,2.9 16.3,0 21,0 21,2.9 23,2.9 23,6.3 25,6.3 25,10.3 27.7,10.3 27.7,12.6 32.2,12.6 32.2,14.5 37,14.5 37,17"/></svg>
<span style="left:946.60px;top:987.80px;font-size:14.97px;line-height:14.97px;font-weight:bold;color:#000;transform:scaleX(0.8964);">TEST</span>
<div style="left:0.00px;top:1045.00px;width:1441.00px;height:36.00px;background:linear-gradient(180deg,#ffffff 0px,#fdfcff 4px,#fff8f0 6px,#fff9d8 9px,#e8d590 10px,#c9a63a 11px,#dfa718 12.5px,#e0a520 17px,#d7a23c 18.5px,#8a9a30 20px,#126514 21.5px,#077730 23px,#055f38 25.5px,#1f5e4c 27px,#3c3b3d 29px,#4e323b 31px,#573a3e 34.5px,#000 36px);"></div>
</body></html>
